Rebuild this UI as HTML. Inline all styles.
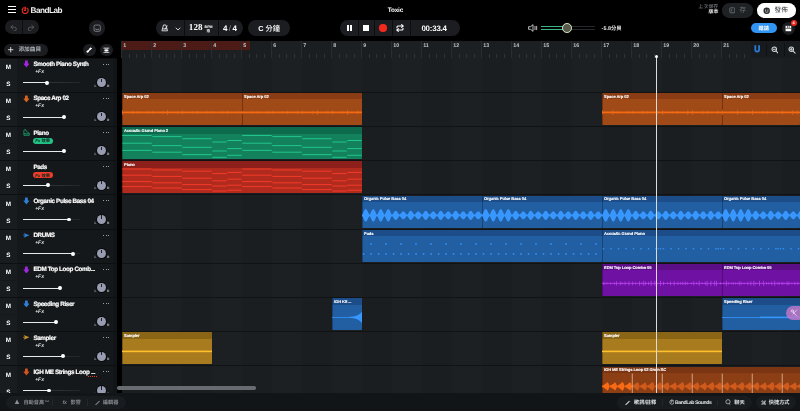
<!DOCTYPE html><html lang="zh-Hant"><head><meta charset="utf-8"><title>Toxic - BandLab</title>
<style>
html,body{margin:0;padding:0;background:#000}
body{width:800px;height:411px;overflow:hidden;position:relative;font-family:'Liberation Sans','Noto Sans CJK TC',sans-serif;color:#fff;-webkit-font-smoothing:antialiased;text-rendering:geometricPrecision}
div,span,svg{position:absolute;box-sizing:border-box}
.t{white-space:nowrap;line-height:1}
.pill{background:#1b1d20;border-radius:10px}
.clip{overflow:hidden;border-radius:0.8px}
.clip .h{left:0;top:0;width:100%;height:6.6px}
.clip .n{-webkit-text-stroke:0.1px #fff;left:2.2px;top:1.6px;font-size:4.1px;font-weight:700;color:#fff;white-space:nowrap;line-height:1;letter-spacing:-0.1px}
.ms{left:0;width:16.6px;background:#191c1f;color:#fff;font-weight:700;font-size:6.3px;text-align:center}
.tn{-webkit-text-stroke:0.18px #fff;font-weight:700;font-size:6.3px;color:#fff;white-space:nowrap;line-height:1;letter-spacing:-0.36px}
.fx{font-weight:700;font-style:italic;font-size:5px;color:#e8e8e8;white-space:nowrap;line-height:1}
.rn{font-size:5.3px;color:#c2c5c9;line-height:1;font-weight:700}
.t,.tn,.fx,.rn,.bt{margin-top:1.1px}
.clip .n{margin-top:0.3px}
.ms{padding-top:1.4px}
.bt{font-size:5.2px;color:#858a90;white-space:nowrap;line-height:1}

</style></head><body><div id="root" style="left:0;top:0;width:800px;height:411px;overflow:hidden;will-change:transform;transform:translateZ(0)">
<div style="left:7.6px;top:6.2px;width:8.2px;height:1px;background:#fff"></div>
<div style="left:7.6px;top:9.1px;width:8.2px;height:1px;background:#fff"></div>
<div style="left:7.6px;top:12.0px;width:8.2px;height:1px;background:#fff"></div>
<svg style="left:21.4px;top:5.6px" width="8.4" height="8.4" viewBox="0 0 24 24"><circle cx="12" cy="13" r="8.6" fill="none" stroke="#e12d20" stroke-width="3.2"/><path d="M12 2v11h-4" fill="none" stroke="#e12d20" stroke-width="3.2"/><rect x="10" y="0" width="8" height="5" fill="#000"/><path d="M12 1.5v11.5h-3.5" fill="none" stroke="#e12d20" stroke-width="3"/></svg>
<span class="t" style="left:30.6px;top:5.9px;font-size:8.2px;font-weight:700;letter-spacing:-0.5px;color:#f2f2f2">BandLab</span>
<span class="t" style="left:387.8px;top:7px;font-size:6.4px;font-weight:700;letter-spacing:-0.2px">Toxic</span>
<div class="pill" style="left:5.2px;top:20.3px;width:33.6px;height:14.2px;border-radius:7.1px"></div>
<svg style="left:9.6px;top:23.6px" width="7.6" height="7.6" viewBox="0 0 24 24" fill="none" stroke="#5f6469" stroke-width="2.6" stroke-linecap="round" stroke-linejoin="round"><path d="M9 4L3 10l6 6"/><path d="M3 10h11a6 6 0 0 1 0 12h-2"/></svg>
<svg style="left:26.6px;top:23.6px" width="7.6" height="7.6" viewBox="0 0 24 24" fill="none" stroke="#5f6469" stroke-width="2.6" stroke-linecap="round" stroke-linejoin="round"><path d="M15 4l6 6-6 6"/><path d="M21 10H10a6 6 0 0 0 0 12h2"/></svg>
<div style="left:22px;top:20.3px;width:0.6px;height:14.2px;background:#0c0d0e"></div>
<div class="pill" style="left:89.4px;top:20.2px;width:15.4px;height:15.4px;border-radius:50%"></div>
<svg style="left:92.9px;top:23.7px" width="8.4" height="8.4" viewBox="0 0 24 24" fill="none" stroke="#8f959b" stroke-width="2.2" stroke-linejoin="round"><rect x="3" y="3" width="18" height="18" rx="4"/><path d="M8 13v3M16 13v3M8 16h8" /></svg>
<div class="pill" style="left:155.6px;top:20.2px;width:87.6px;height:15.8px;border-radius:7.9px"></div>
<div style="left:184.2px;top:20.2px;width:0.6px;height:15.8px;background:#0c0d0e"></div>
<div style="left:218.3px;top:20.2px;width:0.6px;height:15.8px;background:#0c0d0e"></div>
<svg style="left:160.6px;top:24.2px" width="7.8" height="7.8" viewBox="0 0 24 24" fill="none" stroke="#f0f0f0" stroke-width="2.6" stroke-linejoin="round" stroke-linecap="round"><path d="M9 3h6l5 18H4z"/><path d="M12 16L19 6"/><path d="M6 15h12"/></svg>
<svg style="left:174.6px;top:25.6px" width="6" height="6" viewBox="0 0 24 24" fill="none" stroke="#f0f0f0" stroke-width="3.4" stroke-linecap="round" stroke-linejoin="round"><path d="M4 8l8 8 8-8"/></svg>
<span class="t" style="left:188.8px;top:22px;font-size:9.1px;font-weight:700;font-family:'Liberation Serif',serif;letter-spacing:0.05px">128</span>
<span class="t" style="left:204.6px;top:25.1px;font-size:3.6px;font-weight:700">BPM</span>
<span class="t" style="left:206.6px;top:28.7px;font-size:3.6px;font-weight:700">拍</span>
<span class="t" style="left:222.9px;top:23.7px;font-size:8px;font-weight:700;letter-spacing:1.5px">4<i style="font-style:normal;font-weight:400;color:#8a8f95">/</i>4</span>
<div class="pill" style="left:248px;top:20.2px;width:41.8px;height:15.8px;border-radius:7.9px"></div>
<span class="t" style="left:258.2px;top:24.4px;font-size:7.3px;font-weight:500"><b style="font-weight:700">C</b> 分鐘</span>
<div class="pill" style="left:340px;top:20.2px;width:120.4px;height:15.8px;border-radius:7.9px"></div>
<div style="left:357.8px;top:20.2px;width:0.6px;height:15.8px;background:#0c0d0e"></div>
<div style="left:374.2px;top:20.2px;width:0.6px;height:15.8px;background:#0c0d0e"></div>
<div style="left:391.6px;top:20.2px;width:0.6px;height:15.8px;background:#0c0d0e"></div>
<div style="left:409.8px;top:20.2px;width:0.6px;height:15.8px;background:#0c0d0e"></div>
<div style="left:347.2px;top:25.2px;width:1.5px;height:5.8px;background:#fff"></div>
<div style="left:350.4px;top:25.2px;width:1.5px;height:5.8px;background:#fff"></div>
<div style="left:362.8px;top:25.3px;width:5.8px;height:5.8px;background:#fff"></div>
<div style="left:379.2px;top:24.3px;width:7.4px;height:7.4px;border-radius:50%;background:#f5281e"></div>
<svg style="left:396.2px;top:24.2px" width="8" height="8" viewBox="0 0 24 24" fill="none" stroke="#fff" stroke-width="3.3" stroke-linecap="round" stroke-linejoin="round"><path d="M17 2l4 4-4 4"/><path d="M3 11V9a3 3 0 0 1 3-3h15"/><path d="M7 22l-4-4 4-4"/><path d="M21 13v2a3 3 0 0 1-3 3H3"/></svg>
<span class="t" style="left:421.4px;top:23.8px;font-size:7.9px;font-weight:700;letter-spacing:-0.2px">00:33.4</span>
<svg style="left:527.6px;top:24px" width="10" height="8" viewBox="0 0 30 24" fill="none" stroke="#e8e8e8" stroke-width="2.4" stroke-linejoin="round" stroke-linecap="round"><path d="M3 8h5l7-6v20l-7-6H3z"/><path d="M21 7v10M26 7v10"/></svg>
<div style="left:541.4px;top:25.7px;width:53.6px;height:1.3px;background:#25292c;border-radius:1px"></div>
<div style="left:541.4px;top:25.7px;width:26px;height:1.3px;background:linear-gradient(90deg,#3fb585 0,#3fb585 85%,#b9c86a 100%);border-radius:1px"></div>
<div style="left:541.4px;top:29.1px;width:53.6px;height:1.3px;background:#25292c;border-radius:1px"></div>
<div style="left:541.4px;top:29.1px;width:26px;height:1.3px;background:linear-gradient(90deg,#3fb585 0,#3fb585 85%,#b9c86a 100%);border-radius:1px"></div>
<div style="left:562px;top:23.1px;width:9.8px;height:9.8px;border-radius:50%;background:#555a4c;border:1.2px solid #e3ebc2"></div>
<span class="t" style="left:601.6px;top:25.6px;font-size:5.4px;font-weight:700;color:#e8e8e8">-5.8分貝</span>
<span class="t" style="left:698.6px;top:4.6px;font-size:4.9px;color:#8d9298">上次保存</span>
<span class="t" style="left:708.6px;top:9.8px;font-size:4.9px;color:#e8e8e8;font-weight:700">版本</span>
<div class="pill" style="left:722.4px;top:3px;width:31px;height:14.6px;border-radius:7.3px;background:#1f2225"></div>
<svg style="left:728.8px;top:7px" width="6.6" height="6.6" viewBox="0 0 24 24" fill="none" stroke="#80858b" stroke-width="2.6" stroke-linejoin="round"><rect x="3" y="3" width="18" height="18" rx="3"/><path d="M10 8v8"/></svg>
<span class="t" style="left:739.4px;top:6.6px;font-size:6.6px;color:#6f747a">存</span>
<div style="left:757px;top:3px;width:39.2px;height:14.6px;border-radius:7.3px;background:#fff"></div>
<svg style="left:763.4px;top:6.6px" width="7.4" height="7.4" viewBox="0 0 24 24"><circle cx="12" cy="12" r="10.5" fill="#2a2d30"/><circle cx="8" cy="10" r="1.8" fill="#fff"/><circle cx="16" cy="10" r="1.8" fill="#fff"/><path d="M7 15q5 4 10 0" stroke="#fff" stroke-width="2" fill="none"/></svg>
<span class="t" style="left:774.6px;top:6.7px;font-size:6.6px;color:#2a2d30">發佈</span>
<div style="left:751.2px;top:23px;width:26.2px;height:10.2px;border-radius:5.1px;background:#3294f2"></div>
<span class="t" style="left:758.6px;top:25.6px;font-size:5.2px;font-weight:700;color:#fff">邀請</span>
<div class="pill" style="left:782.2px;top:21.8px;width:13px;height:13px;border-radius:50%"></div>
<svg style="left:785.4px;top:24.8px" width="6.8" height="6.8" viewBox="0 0 24 24"><path d="M2 3h20v19H2z" fill="#fff"/><path d="M9 3v8M15 3v8M2 12h20" stroke="#1b1d20" stroke-width="2.2"/></svg>
<div style="left:790.6px;top:20.2px;width:6px;height:6px;border-radius:50%;background:#f0281e"></div>
<span class="t" style="left:792.4px;top:21.4px;font-size:3.8px;font-weight:700">4</span>
<div class="pill" style="left:3.6px;top:43.6px;width:44.4px;height:12.8px;border-radius:6.4px"></div>
<svg style="left:8.4px;top:47.4px" width="5.4" height="5.4" viewBox="0 0 24 24" stroke="#fff" stroke-width="3.4" stroke-linecap="round"><path d="M12 2v20M2 12h20"/></svg>
<span class="t" style="left:18.4px;top:47.2px;font-size:5.7px;font-weight:700;color:#aab0b6">添加曲目</span>
<div class="pill" style="left:83.2px;top:43.8px;width:12.6px;height:12.6px;border-radius:50%"></div>
<svg style="left:86.4px;top:47px" width="6.2" height="6.2" viewBox="0 0 24 24" fill="none" stroke="#fff" stroke-width="5.5" stroke-linecap="round"><path d="M7 17L17 7"/><circle cx="18" cy="6" r="3.2" fill="#fff" stroke-width="2"/><circle cx="6" cy="18" r="3.2" fill="#fff" stroke-width="2"/></svg>
<div class="pill" style="left:100.2px;top:43.8px;width:12.6px;height:12.6px;border-radius:50%"></div>
<svg style="left:103.1px;top:46.7px" width="6.8" height="6.8" viewBox="0 0 24 24" fill="none" stroke="#fff" stroke-width="2.8" stroke-linecap="round"><path d="M3 4h18M3 20h18"/><rect x="5" y="9" width="14" height="6" rx="1" fill="#fff" stroke="none"/><path d="M8 6l4 3 4-3M8 18l4-3 4 3" stroke-width="2"/></svg>
<div style="left:0;top:57.8px;width:117.2px;height:353.2px;background:#15181b"></div>
<div style="left:112.6px;top:57.8px;width:4.6px;height:353.2px;background:#121517"></div>
<div class="ms" style="top:58.4px;height:16.50px;line-height:16.50px">M</div>
<div class="ms" style="top:75.4px;height:16.60px;line-height:16.60px">S</div>
<div style="left:0;top:57.6px;width:117.2px;height:0.8px;background:#0c0e0f"></div>
<svg style="left:23.4px;top:60.4px" width="6.8" height="7.4" viewBox="0 0 22 24"><path d="M8 1.5h6a1.5 1.5 0 0 1 1.5 1.5v8.5h3.8a1 1 0 0 1 .8 1.7l-8 9.6a1.5 1.5 0 0 1-2.2 0l-8-9.6a1 1 0 0 1 .8-1.7h3.8V3A1.5 1.5 0 0 1 8 1.5z" fill="#a326e0"/></svg>
<span class="tn" style="left:33.4px;top:61.2px">Smooth Piano Synth</span>
<div style="left:103.3px;top:63.5px;width:1.2px;height:1.2px;border-radius:50%;background:#c9ccd0"></div>
<div style="left:105.6px;top:63.5px;width:1.2px;height:1.2px;border-radius:50%;background:#c9ccd0"></div>
<div style="left:107.9px;top:63.5px;width:1.2px;height:1.2px;border-radius:50%;background:#c9ccd0"></div>
<span class="fx" style="left:35.2px;top:69.2px">+Fx</span>
<div style="left:23px;top:82.3px;width:57px;height:0.8px;background:linear-gradient(90deg,#3a3d41,#24272a)"></div>
<div style="left:23px;top:82.3px;width:24.0px;height:0.8px;background:#e9eaeb"></div>
<div style="left:45.1px;top:80.8px;width:3.8px;height:3.8px;border-radius:50%;background:#fff"></div>
<div style="left:96.8px;top:77.9px;width:9.2px;height:9.2px;border-radius:50%;background:#979cb0;box-shadow:0 0 0 0.9px #08090b"></div>
<div style="left:100.95px;top:78.6px;width:0.9px;height:3.2px;background:#1d2026"></div>
<span class="t" style="left:94.4px;top:83.8px;font-size:3.3px;color:#b8bcc4;font-weight:700">L</span>
<span class="t" style="left:107px;top:83.8px;font-size:3.3px;color:#b8bcc4;font-weight:700">R</span>
<div class="ms" style="top:92.6px;height:16.50px;line-height:16.50px">M</div>
<div class="ms" style="top:109.6px;height:16.60px;line-height:16.60px">S</div>
<div style="left:0;top:91.8px;width:117.2px;height:0.8px;background:#0c0e0f"></div>
<svg style="left:23.4px;top:94.6px" width="6.8" height="7.4" viewBox="0 0 22 24"><path d="M8 1.5h6a1.5 1.5 0 0 1 1.5 1.5v8.5h3.8a1 1 0 0 1 .8 1.7l-8 9.6a1.5 1.5 0 0 1-2.2 0l-8-9.6a1 1 0 0 1 .8-1.7h3.8V3A1.5 1.5 0 0 1 8 1.5z" fill="#d8641e"/></svg>
<span class="tn" style="left:33.4px;top:95.4px">Space Arp 02</span>
<div style="left:103.3px;top:97.7px;width:1.2px;height:1.2px;border-radius:50%;background:#c9ccd0"></div>
<div style="left:105.6px;top:97.7px;width:1.2px;height:1.2px;border-radius:50%;background:#c9ccd0"></div>
<div style="left:107.9px;top:97.7px;width:1.2px;height:1.2px;border-radius:50%;background:#c9ccd0"></div>
<span class="fx" style="left:35.2px;top:103.4px">+Fx</span>
<div style="left:23px;top:116.5px;width:57px;height:0.8px;background:linear-gradient(90deg,#3a3d41,#24272a)"></div>
<div style="left:23px;top:116.5px;width:41.0px;height:0.8px;background:#e9eaeb"></div>
<div style="left:62.1px;top:115.0px;width:3.8px;height:3.8px;border-radius:50%;background:#fff"></div>
<div style="left:96.8px;top:112.1px;width:9.2px;height:9.2px;border-radius:50%;background:#979cb0;box-shadow:0 0 0 0.9px #08090b"></div>
<div style="left:100.95px;top:112.8px;width:0.9px;height:3.2px;background:#1d2026"></div>
<span class="t" style="left:94.4px;top:118.0px;font-size:3.3px;color:#b8bcc4;font-weight:700">L</span>
<span class="t" style="left:107px;top:118.0px;font-size:3.3px;color:#b8bcc4;font-weight:700">R</span>
<div class="ms" style="top:126.8px;height:16.50px;line-height:16.50px">M</div>
<div class="ms" style="top:143.8px;height:16.60px;line-height:16.60px">S</div>
<div style="left:0;top:126.0px;width:117.2px;height:0.8px;background:#0c0e0f"></div>
<svg style="left:23.4px;top:128.8px" width="7.2" height="7.2" viewBox="0 0 24 24" fill="none" stroke="#1fb87a" stroke-width="2.4" stroke-linejoin="round"><path d="M3 21V6a4 4 0 0 1 8 0c0 4 3 3 5 5 3 0 5 3 5 6v4z"/><path d="M3 16h18"/></svg>
<span class="tn" style="left:33.4px;top:129.6px">Piano</span>
<div style="left:103.3px;top:131.9px;width:1.2px;height:1.2px;border-radius:50%;background:#c9ccd0"></div>
<div style="left:105.6px;top:131.9px;width:1.2px;height:1.2px;border-radius:50%;background:#c9ccd0"></div>
<div style="left:107.9px;top:131.9px;width:1.2px;height:1.2px;border-radius:50%;background:#c9ccd0"></div>
<div style="left:33px;top:137.5px;width:20.2px;height:6px;border-radius:3px;background:#22c386"></div>
<span class="t" style="left:35.2px;top:138.3px;font-size:4.4px;font-weight:700;font-style:italic;color:#0f2a20">Fx</span>
<span class="t" style="left:41.4px;top:138.3px;font-size:4.3px;font-weight:700;color:#0f2a20">效果</span>
<div style="left:23px;top:150.7px;width:57px;height:0.8px;background:linear-gradient(90deg,#3a3d41,#24272a)"></div>
<div style="left:23px;top:150.7px;width:41.0px;height:0.8px;background:#e9eaeb"></div>
<div style="left:62.1px;top:149.2px;width:3.8px;height:3.8px;border-radius:50%;background:#fff"></div>
<div style="left:96.8px;top:146.3px;width:9.2px;height:9.2px;border-radius:50%;background:#979cb0;box-shadow:0 0 0 0.9px #08090b"></div>
<div style="left:100.95px;top:147.0px;width:0.9px;height:3.2px;background:#1d2026"></div>
<span class="t" style="left:94.4px;top:152.2px;font-size:3.3px;color:#b8bcc4;font-weight:700">L</span>
<span class="t" style="left:107px;top:152.2px;font-size:3.3px;color:#b8bcc4;font-weight:700">R</span>
<div class="ms" style="top:161.0px;height:16.50px;line-height:16.50px">M</div>
<div class="ms" style="top:178.0px;height:16.60px;line-height:16.60px">S</div>
<div style="left:0;top:160.2px;width:117.2px;height:0.8px;background:#0c0e0f"></div>
<span class="tn" style="left:33.4px;top:163.8px">Pads</span>
<div style="left:103.3px;top:166.1px;width:1.2px;height:1.2px;border-radius:50%;background:#c9ccd0"></div>
<div style="left:105.6px;top:166.1px;width:1.2px;height:1.2px;border-radius:50%;background:#c9ccd0"></div>
<div style="left:107.9px;top:166.1px;width:1.2px;height:1.2px;border-radius:50%;background:#c9ccd0"></div>
<div style="left:33px;top:171.7px;width:20.2px;height:6px;border-radius:3px;background:#f03c2a"></div>
<span class="t" style="left:35.2px;top:172.5px;font-size:4.4px;font-weight:700;font-style:italic;color:#0f2a20">Fx</span>
<span class="t" style="left:41.4px;top:172.5px;font-size:4.3px;font-weight:700;color:#0f2a20">效果</span>
<div style="left:23px;top:184.9px;width:57px;height:0.8px;background:linear-gradient(90deg,#3a3d41,#24272a)"></div>
<div style="left:23px;top:184.9px;width:25.0px;height:0.8px;background:#e9eaeb"></div>
<div style="left:46.1px;top:183.4px;width:3.8px;height:3.8px;border-radius:50%;background:#fff"></div>
<div style="left:96.8px;top:180.5px;width:9.2px;height:9.2px;border-radius:50%;background:#979cb0;box-shadow:0 0 0 0.9px #08090b"></div>
<div style="left:100.95px;top:181.2px;width:0.9px;height:3.2px;background:#1d2026"></div>
<span class="t" style="left:94.4px;top:186.4px;font-size:3.3px;color:#b8bcc4;font-weight:700">L</span>
<span class="t" style="left:107px;top:186.4px;font-size:3.3px;color:#b8bcc4;font-weight:700">R</span>
<div class="ms" style="top:195.2px;height:16.50px;line-height:16.50px">M</div>
<div class="ms" style="top:212.2px;height:16.60px;line-height:16.60px">S</div>
<div style="left:0;top:194.4px;width:117.2px;height:0.8px;background:#0c0e0f"></div>
<svg style="left:23.4px;top:197.2px" width="6.8" height="7.4" viewBox="0 0 22 24"><path d="M8 1.5h6a1.5 1.5 0 0 1 1.5 1.5v8.5h3.8a1 1 0 0 1 .8 1.7l-8 9.6a1.5 1.5 0 0 1-2.2 0l-8-9.6a1 1 0 0 1 .8-1.7h3.8V3A1.5 1.5 0 0 1 8 1.5z" fill="#2f7fd8"/></svg>
<span class="tn" style="left:33.4px;top:198.0px">Organic Pulse Bass 04</span>
<div style="left:103.3px;top:200.3px;width:1.2px;height:1.2px;border-radius:50%;background:#c9ccd0"></div>
<div style="left:105.6px;top:200.3px;width:1.2px;height:1.2px;border-radius:50%;background:#c9ccd0"></div>
<div style="left:107.9px;top:200.3px;width:1.2px;height:1.2px;border-radius:50%;background:#c9ccd0"></div>
<span class="fx" style="left:35.2px;top:206.0px">+Fx</span>
<div style="left:23px;top:219.1px;width:57px;height:0.8px;background:linear-gradient(90deg,#3a3d41,#24272a)"></div>
<div style="left:23px;top:219.1px;width:46.0px;height:0.8px;background:#e9eaeb"></div>
<div style="left:67.1px;top:217.6px;width:3.8px;height:3.8px;border-radius:50%;background:#fff"></div>
<div style="left:96.8px;top:214.7px;width:9.2px;height:9.2px;border-radius:50%;background:#979cb0;box-shadow:0 0 0 0.9px #08090b"></div>
<div style="left:100.95px;top:215.4px;width:0.9px;height:3.2px;background:#1d2026"></div>
<span class="t" style="left:94.4px;top:220.6px;font-size:3.3px;color:#b8bcc4;font-weight:700">L</span>
<span class="t" style="left:107px;top:220.6px;font-size:3.3px;color:#b8bcc4;font-weight:700">R</span>
<div class="ms" style="top:229.4px;height:16.50px;line-height:16.50px">M</div>
<div class="ms" style="top:246.4px;height:16.60px;line-height:16.60px">S</div>
<div style="left:0;top:228.6px;width:117.2px;height:0.8px;background:#0c0e0f"></div>
<svg style="left:23.4px;top:231.8px" width="7" height="6.6" viewBox="0 0 24 22"><path d="M2 3l20 8-20 8 5-8z" fill="#2f7fd8"/><path d="M0 11h9" stroke="#2f7fd8" stroke-width="2.4"/></svg>
<span class="tn" style="left:33.4px;top:232.2px">DRUMS</span>
<div style="left:103.3px;top:234.5px;width:1.2px;height:1.2px;border-radius:50%;background:#c9ccd0"></div>
<div style="left:105.6px;top:234.5px;width:1.2px;height:1.2px;border-radius:50%;background:#c9ccd0"></div>
<div style="left:107.9px;top:234.5px;width:1.2px;height:1.2px;border-radius:50%;background:#c9ccd0"></div>
<span class="fx" style="left:35.2px;top:240.2px">+Fx</span>
<div style="left:23px;top:253.3px;width:57px;height:0.8px;background:linear-gradient(90deg,#3a3d41,#24272a)"></div>
<div style="left:23px;top:253.3px;width:50.0px;height:0.8px;background:#e9eaeb"></div>
<div style="left:71.1px;top:251.8px;width:3.8px;height:3.8px;border-radius:50%;background:#fff"></div>
<div style="left:96.8px;top:248.9px;width:9.2px;height:9.2px;border-radius:50%;background:#979cb0;box-shadow:0 0 0 0.9px #08090b"></div>
<div style="left:100.95px;top:249.6px;width:0.9px;height:3.2px;background:#1d2026"></div>
<span class="t" style="left:94.4px;top:254.8px;font-size:3.3px;color:#b8bcc4;font-weight:700">L</span>
<span class="t" style="left:107px;top:254.8px;font-size:3.3px;color:#b8bcc4;font-weight:700">R</span>
<div class="ms" style="top:263.6px;height:16.50px;line-height:16.50px">M</div>
<div class="ms" style="top:280.6px;height:16.60px;line-height:16.60px">S</div>
<div style="left:0;top:262.8px;width:117.2px;height:0.8px;background:#0c0e0f"></div>
<svg style="left:23.4px;top:265.6px" width="6.8" height="7.4" viewBox="0 0 22 24"><path d="M8 1.5h6a1.5 1.5 0 0 1 1.5 1.5v8.5h3.8a1 1 0 0 1 .8 1.7l-8 9.6a1.5 1.5 0 0 1-2.2 0l-8-9.6a1 1 0 0 1 .8-1.7h3.8V3A1.5 1.5 0 0 1 8 1.5z" fill="#a326e0"/></svg>
<span class="tn" style="left:33.4px;top:266.4px">EDM Top Loop Comb...</span>
<div style="left:103.3px;top:268.7px;width:1.2px;height:1.2px;border-radius:50%;background:#c9ccd0"></div>
<div style="left:105.6px;top:268.7px;width:1.2px;height:1.2px;border-radius:50%;background:#c9ccd0"></div>
<div style="left:107.9px;top:268.7px;width:1.2px;height:1.2px;border-radius:50%;background:#c9ccd0"></div>
<span class="fx" style="left:35.2px;top:274.4px">+Fx</span>
<div style="left:23px;top:287.5px;width:57px;height:0.8px;background:linear-gradient(90deg,#3a3d41,#24272a)"></div>
<div style="left:23px;top:287.5px;width:37.0px;height:0.8px;background:#e9eaeb"></div>
<div style="left:58.1px;top:286.0px;width:3.8px;height:3.8px;border-radius:50%;background:#fff"></div>
<div style="left:96.8px;top:283.1px;width:9.2px;height:9.2px;border-radius:50%;background:#979cb0;box-shadow:0 0 0 0.9px #08090b"></div>
<div style="left:100.95px;top:283.8px;width:0.9px;height:3.2px;background:#1d2026"></div>
<span class="t" style="left:94.4px;top:289.0px;font-size:3.3px;color:#b8bcc4;font-weight:700">L</span>
<span class="t" style="left:107px;top:289.0px;font-size:3.3px;color:#b8bcc4;font-weight:700">R</span>
<div class="ms" style="top:297.8px;height:16.50px;line-height:16.50px">M</div>
<div class="ms" style="top:314.8px;height:16.60px;line-height:16.60px">S</div>
<div style="left:0;top:297.0px;width:117.2px;height:0.8px;background:#0c0e0f"></div>
<svg style="left:23.4px;top:299.8px" width="6.8" height="7.4" viewBox="0 0 22 24"><path d="M8 1.5h6a1.5 1.5 0 0 1 1.5 1.5v8.5h3.8a1 1 0 0 1 .8 1.7l-8 9.6a1.5 1.5 0 0 1-2.2 0l-8-9.6a1 1 0 0 1 .8-1.7h3.8V3A1.5 1.5 0 0 1 8 1.5z" fill="#2f7fd8"/></svg>
<span class="tn" style="left:33.4px;top:300.6px">Speeding Riser</span>
<div style="left:103.3px;top:302.9px;width:1.2px;height:1.2px;border-radius:50%;background:#c9ccd0"></div>
<div style="left:105.6px;top:302.9px;width:1.2px;height:1.2px;border-radius:50%;background:#c9ccd0"></div>
<div style="left:107.9px;top:302.9px;width:1.2px;height:1.2px;border-radius:50%;background:#c9ccd0"></div>
<span class="fx" style="left:35.2px;top:308.6px">+Fx</span>
<div style="left:23px;top:321.7px;width:57px;height:0.8px;background:linear-gradient(90deg,#3a3d41,#24272a)"></div>
<div style="left:23px;top:321.7px;width:32.7px;height:0.8px;background:#e9eaeb"></div>
<div style="left:53.8px;top:320.2px;width:3.8px;height:3.8px;border-radius:50%;background:#fff"></div>
<div style="left:96.8px;top:317.3px;width:9.2px;height:9.2px;border-radius:50%;background:#979cb0;box-shadow:0 0 0 0.9px #08090b"></div>
<div style="left:100.95px;top:318.0px;width:0.9px;height:3.2px;background:#1d2026"></div>
<span class="t" style="left:94.4px;top:323.2px;font-size:3.3px;color:#b8bcc4;font-weight:700">L</span>
<span class="t" style="left:107px;top:323.2px;font-size:3.3px;color:#b8bcc4;font-weight:700">R</span>
<div class="ms" style="top:332.0px;height:16.50px;line-height:16.50px">M</div>
<div class="ms" style="top:349.0px;height:16.60px;line-height:16.60px">S</div>
<div style="left:0;top:331.2px;width:117.2px;height:0.8px;background:#0c0e0f"></div>
<svg style="left:23.4px;top:334.4px" width="7" height="6.6" viewBox="0 0 24 22"><path d="M2 3l20 8-20 8 5-8z" fill="#c8922a"/><path d="M0 11h9" stroke="#c8922a" stroke-width="2.4"/></svg>
<span class="tn" style="left:33.4px;top:334.8px">Sampler</span>
<div style="left:103.3px;top:337.1px;width:1.2px;height:1.2px;border-radius:50%;background:#c9ccd0"></div>
<div style="left:105.6px;top:337.1px;width:1.2px;height:1.2px;border-radius:50%;background:#c9ccd0"></div>
<div style="left:107.9px;top:337.1px;width:1.2px;height:1.2px;border-radius:50%;background:#c9ccd0"></div>
<span class="fx" style="left:35.2px;top:342.8px">+Fx</span>
<div style="left:23px;top:355.9px;width:57px;height:0.8px;background:linear-gradient(90deg,#3a3d41,#24272a)"></div>
<div style="left:23px;top:355.9px;width:39.7px;height:0.8px;background:#e9eaeb"></div>
<div style="left:60.8px;top:354.4px;width:3.8px;height:3.8px;border-radius:50%;background:#fff"></div>
<div style="left:96.8px;top:351.5px;width:9.2px;height:9.2px;border-radius:50%;background:#979cb0;box-shadow:0 0 0 0.9px #08090b"></div>
<div style="left:100.95px;top:352.2px;width:0.9px;height:3.2px;background:#1d2026"></div>
<span class="t" style="left:94.4px;top:357.4px;font-size:3.3px;color:#b8bcc4;font-weight:700">L</span>
<span class="t" style="left:107px;top:357.4px;font-size:3.3px;color:#b8bcc4;font-weight:700">R</span>
<div class="ms" style="top:366.2px;height:16.50px;line-height:16.50px">M</div>
<div class="ms" style="top:383.2px;height:16.60px;line-height:16.60px">S</div>
<div style="left:0;top:365.4px;width:117.2px;height:0.8px;background:#0c0e0f"></div>
<svg style="left:23.4px;top:368.2px" width="6.8" height="7.4" viewBox="0 0 22 24"><path d="M8 1.5h6a1.5 1.5 0 0 1 1.5 1.5v8.5h3.8a1 1 0 0 1 .8 1.7l-8 9.6a1.5 1.5 0 0 1-2.2 0l-8-9.6a1 1 0 0 1 .8-1.7h3.8V3A1.5 1.5 0 0 1 8 1.5z" fill="#d8541e"/></svg>
<span class="tn" style="left:33.4px;top:369.0px">IGH ME Strings Loop ...</span>
<div style="left:103.3px;top:371.3px;width:1.2px;height:1.2px;border-radius:50%;background:#c9ccd0"></div>
<div style="left:105.6px;top:371.3px;width:1.2px;height:1.2px;border-radius:50%;background:#c9ccd0"></div>
<div style="left:107.9px;top:371.3px;width:1.2px;height:1.2px;border-radius:50%;background:#c9ccd0"></div>
<div style="left:87.8px;top:375.6px;width:9.6px;height:0;border-top:0.6px dotted #e23a2a"></div>
<span class="fx" style="left:35.2px;top:377.0px">+Fx</span>
<div style="left:23px;top:390.1px;width:57px;height:0.8px;background:linear-gradient(90deg,#3a3d41,#24272a)"></div>
<div style="left:23px;top:390.1px;width:26.0px;height:0.8px;background:#e9eaeb"></div>
<div style="left:47.1px;top:388.6px;width:3.8px;height:3.8px;border-radius:50%;background:#fff"></div>
<div style="left:96.8px;top:385.7px;width:9.2px;height:9.2px;border-radius:50%;background:#979cb0;box-shadow:0 0 0 0.9px #08090b"></div>
<div style="left:100.95px;top:386.4px;width:0.9px;height:3.2px;background:#1d2026"></div>
<span class="t" style="left:94.4px;top:391.6px;font-size:3.3px;color:#b8bcc4;font-weight:700">L</span>
<span class="t" style="left:107px;top:391.6px;font-size:3.3px;color:#b8bcc4;font-weight:700">R</span>
<div id="tl" style="left:121.7px;top:41.2px;width:678.3px;height:369.8px;background:#1b1f22;overflow:hidden"></div>
<div style="left:121.7px;top:41.2px;width:678.3px;height:369.8px;background:repeating-linear-gradient(90deg,rgba(0,0,0,0.04) 0,rgba(0,0,0,0.04) 30px,rgba(255,255,255,0.005) 30px,rgba(255,255,255,0.005) 60px)"></div>
<div style="left:121.7px;top:41.2px;width:127.9px;height:8.6px;background:#4c1b15"></div>
<div style="left:121.4px;top:41.2px;width:0.6px;height:16.6px;background:#292d31"></div>
<span class="rn" style="left:123.2px;top:42.8px">1</span>
<div style="left:128.9px;top:53.8px;width:0.6px;height:4px;background:#303438"></div>
<div style="left:136.4px;top:53.8px;width:0.6px;height:4px;background:#303438"></div>
<div style="left:143.9px;top:53.8px;width:0.6px;height:4px;background:#303438"></div>
<div style="left:151.4px;top:41.2px;width:0.6px;height:16.6px;background:#292d31"></div>
<span class="rn" style="left:153.2px;top:42.8px">2</span>
<div style="left:158.9px;top:53.8px;width:0.6px;height:4px;background:#303438"></div>
<div style="left:166.4px;top:53.8px;width:0.6px;height:4px;background:#303438"></div>
<div style="left:173.9px;top:53.8px;width:0.6px;height:4px;background:#303438"></div>
<div style="left:181.4px;top:41.2px;width:0.6px;height:16.6px;background:#292d31"></div>
<span class="rn" style="left:183.2px;top:42.8px">3</span>
<div style="left:188.9px;top:53.8px;width:0.6px;height:4px;background:#303438"></div>
<div style="left:196.4px;top:53.8px;width:0.6px;height:4px;background:#303438"></div>
<div style="left:203.9px;top:53.8px;width:0.6px;height:4px;background:#303438"></div>
<div style="left:211.4px;top:41.2px;width:0.6px;height:16.6px;background:#292d31"></div>
<span class="rn" style="left:213.2px;top:42.8px">4</span>
<div style="left:218.9px;top:53.8px;width:0.6px;height:4px;background:#303438"></div>
<div style="left:226.4px;top:53.8px;width:0.6px;height:4px;background:#303438"></div>
<div style="left:233.9px;top:53.8px;width:0.6px;height:4px;background:#303438"></div>
<div style="left:241.4px;top:41.2px;width:0.6px;height:16.6px;background:#292d31"></div>
<span class="rn" style="left:243.2px;top:42.8px">5</span>
<div style="left:248.9px;top:53.8px;width:0.6px;height:4px;background:#303438"></div>
<div style="left:256.4px;top:53.8px;width:0.6px;height:4px;background:#303438"></div>
<div style="left:263.9px;top:53.8px;width:0.6px;height:4px;background:#303438"></div>
<div style="left:271.4px;top:41.2px;width:0.6px;height:16.6px;background:#292d31"></div>
<span class="rn" style="left:273.2px;top:42.8px">6</span>
<div style="left:278.9px;top:53.8px;width:0.6px;height:4px;background:#303438"></div>
<div style="left:286.4px;top:53.8px;width:0.6px;height:4px;background:#303438"></div>
<div style="left:293.9px;top:53.8px;width:0.6px;height:4px;background:#303438"></div>
<div style="left:301.4px;top:41.2px;width:0.6px;height:16.6px;background:#292d31"></div>
<span class="rn" style="left:303.2px;top:42.8px">7</span>
<div style="left:308.9px;top:53.8px;width:0.6px;height:4px;background:#303438"></div>
<div style="left:316.4px;top:53.8px;width:0.6px;height:4px;background:#303438"></div>
<div style="left:323.9px;top:53.8px;width:0.6px;height:4px;background:#303438"></div>
<div style="left:331.4px;top:41.2px;width:0.6px;height:16.6px;background:#292d31"></div>
<span class="rn" style="left:333.2px;top:42.8px">8</span>
<div style="left:338.9px;top:53.8px;width:0.6px;height:4px;background:#303438"></div>
<div style="left:346.4px;top:53.8px;width:0.6px;height:4px;background:#303438"></div>
<div style="left:353.9px;top:53.8px;width:0.6px;height:4px;background:#303438"></div>
<div style="left:361.4px;top:41.2px;width:0.6px;height:16.6px;background:#292d31"></div>
<span class="rn" style="left:363.2px;top:42.8px">9</span>
<div style="left:368.9px;top:53.8px;width:0.6px;height:4px;background:#303438"></div>
<div style="left:376.4px;top:53.8px;width:0.6px;height:4px;background:#303438"></div>
<div style="left:383.9px;top:53.8px;width:0.6px;height:4px;background:#303438"></div>
<div style="left:391.4px;top:41.2px;width:0.6px;height:16.6px;background:#292d31"></div>
<span class="rn" style="left:393.2px;top:42.8px">10</span>
<div style="left:398.9px;top:53.8px;width:0.6px;height:4px;background:#303438"></div>
<div style="left:406.4px;top:53.8px;width:0.6px;height:4px;background:#303438"></div>
<div style="left:413.9px;top:53.8px;width:0.6px;height:4px;background:#303438"></div>
<div style="left:421.4px;top:41.2px;width:0.6px;height:16.6px;background:#292d31"></div>
<span class="rn" style="left:423.2px;top:42.8px">11</span>
<div style="left:428.9px;top:53.8px;width:0.6px;height:4px;background:#303438"></div>
<div style="left:436.4px;top:53.8px;width:0.6px;height:4px;background:#303438"></div>
<div style="left:443.9px;top:53.8px;width:0.6px;height:4px;background:#303438"></div>
<div style="left:451.4px;top:41.2px;width:0.6px;height:16.6px;background:#292d31"></div>
<span class="rn" style="left:453.2px;top:42.8px">12</span>
<div style="left:458.9px;top:53.8px;width:0.6px;height:4px;background:#303438"></div>
<div style="left:466.4px;top:53.8px;width:0.6px;height:4px;background:#303438"></div>
<div style="left:473.9px;top:53.8px;width:0.6px;height:4px;background:#303438"></div>
<div style="left:481.4px;top:41.2px;width:0.6px;height:16.6px;background:#292d31"></div>
<span class="rn" style="left:483.2px;top:42.8px">13</span>
<div style="left:488.9px;top:53.8px;width:0.6px;height:4px;background:#303438"></div>
<div style="left:496.4px;top:53.8px;width:0.6px;height:4px;background:#303438"></div>
<div style="left:503.9px;top:53.8px;width:0.6px;height:4px;background:#303438"></div>
<div style="left:511.4px;top:41.2px;width:0.6px;height:16.6px;background:#292d31"></div>
<span class="rn" style="left:513.2px;top:42.8px">14</span>
<div style="left:518.9px;top:53.8px;width:0.6px;height:4px;background:#303438"></div>
<div style="left:526.4px;top:53.8px;width:0.6px;height:4px;background:#303438"></div>
<div style="left:533.9px;top:53.8px;width:0.6px;height:4px;background:#303438"></div>
<div style="left:541.4px;top:41.2px;width:0.6px;height:16.6px;background:#292d31"></div>
<span class="rn" style="left:543.2px;top:42.8px">15</span>
<div style="left:548.9px;top:53.8px;width:0.6px;height:4px;background:#303438"></div>
<div style="left:556.4px;top:53.8px;width:0.6px;height:4px;background:#303438"></div>
<div style="left:563.9px;top:53.8px;width:0.6px;height:4px;background:#303438"></div>
<div style="left:571.4px;top:41.2px;width:0.6px;height:16.6px;background:#292d31"></div>
<span class="rn" style="left:573.2px;top:42.8px">16</span>
<div style="left:578.9px;top:53.8px;width:0.6px;height:4px;background:#303438"></div>
<div style="left:586.4px;top:53.8px;width:0.6px;height:4px;background:#303438"></div>
<div style="left:593.9px;top:53.8px;width:0.6px;height:4px;background:#303438"></div>
<div style="left:601.4px;top:41.2px;width:0.6px;height:16.6px;background:#292d31"></div>
<span class="rn" style="left:603.2px;top:42.8px">17</span>
<div style="left:608.9px;top:53.8px;width:0.6px;height:4px;background:#303438"></div>
<div style="left:616.4px;top:53.8px;width:0.6px;height:4px;background:#303438"></div>
<div style="left:623.9px;top:53.8px;width:0.6px;height:4px;background:#303438"></div>
<div style="left:631.4px;top:41.2px;width:0.6px;height:16.6px;background:#292d31"></div>
<span class="rn" style="left:633.2px;top:42.8px">18</span>
<div style="left:638.9px;top:53.8px;width:0.6px;height:4px;background:#303438"></div>
<div style="left:646.4px;top:53.8px;width:0.6px;height:4px;background:#303438"></div>
<div style="left:653.9px;top:53.8px;width:0.6px;height:4px;background:#303438"></div>
<div style="left:661.4px;top:41.2px;width:0.6px;height:16.6px;background:#292d31"></div>
<span class="rn" style="left:663.2px;top:42.8px">19</span>
<div style="left:668.9px;top:53.8px;width:0.6px;height:4px;background:#303438"></div>
<div style="left:676.4px;top:53.8px;width:0.6px;height:4px;background:#303438"></div>
<div style="left:683.9px;top:53.8px;width:0.6px;height:4px;background:#303438"></div>
<div style="left:691.4px;top:41.2px;width:0.6px;height:16.6px;background:#292d31"></div>
<span class="rn" style="left:693.2px;top:42.8px">20</span>
<div style="left:698.9px;top:53.8px;width:0.6px;height:4px;background:#303438"></div>
<div style="left:706.4px;top:53.8px;width:0.6px;height:4px;background:#303438"></div>
<div style="left:713.9px;top:53.8px;width:0.6px;height:4px;background:#303438"></div>
<div style="left:721.4px;top:41.2px;width:0.6px;height:16.6px;background:#292d31"></div>
<span class="rn" style="left:723.2px;top:42.8px">21</span>
<div style="left:728.9px;top:53.8px;width:0.6px;height:4px;background:#303438"></div>
<div style="left:736.4px;top:53.8px;width:0.6px;height:4px;background:#303438"></div>
<div style="left:743.9px;top:53.8px;width:0.6px;height:4px;background:#303438"></div>
<div style="left:751.4px;top:41.2px;width:0.6px;height:16.6px;background:#292d31"></div>
<div style="left:781.4px;top:41.2px;width:0.6px;height:16.6px;background:#292d31"></div>
<div style="left:751px;top:41.2px;width:49px;height:16.6px;background:#181b1e"></div>
<div style="left:766.3px;top:43px;width:0.5px;height:13px;background:#0f1113"></div>
<div style="left:783.8px;top:43px;width:0.5px;height:13px;background:#0f1113"></div>
<svg style="left:754.4px;top:44.6px" width="6.4" height="8.2" viewBox="0 0 20 26" fill="none" stroke="#2a7ad8" stroke-width="5.6"><path d="M4 1v14a6 6 0 0 0 12 0V1"/></svg>
<svg style="left:770.6px;top:45.8px" width="7.8" height="7.8" viewBox="0 0 24 24" fill="none" stroke="#d4d7da" stroke-width="3.2" stroke-linecap="round"><circle cx="10" cy="10" r="7"/><path d="M15.5 15.5L22 22"/><path d="M7 10h6"/></svg>
<svg style="left:788.2px;top:45.8px" width="7.8" height="7.8" viewBox="0 0 24 24" fill="none" stroke="#d4d7da" stroke-width="3.2" stroke-linecap="round"><circle cx="10" cy="10" r="7"/><path d="M15.5 15.5L22 22"/><path d="M7 10h6 M10 7v6"/></svg>
<div style="left:121.7px;top:91.7px;width:678.3px;height:0.9px;background:#101214"></div>
<div style="left:121.7px;top:125.9px;width:678.3px;height:0.9px;background:#101214"></div>
<div style="left:121.7px;top:160.1px;width:678.3px;height:0.9px;background:#101214"></div>
<div style="left:121.7px;top:194.3px;width:678.3px;height:0.9px;background:#101214"></div>
<div style="left:121.7px;top:228.5px;width:678.3px;height:0.9px;background:#101214"></div>
<div style="left:121.7px;top:262.7px;width:678.3px;height:0.9px;background:#101214"></div>
<div style="left:121.7px;top:296.9px;width:678.3px;height:0.9px;background:#101214"></div>
<div style="left:121.7px;top:331.1px;width:678.3px;height:0.9px;background:#101214"></div>
<div style="left:121.7px;top:365.3px;width:678.3px;height:0.9px;background:#101214"></div>
<div style="left:121.7px;top:399.5px;width:678.3px;height:0.9px;background:#101214"></div>
<div class="clip" style="left:121.85px;top:92.9px;width:119.70px;height:32.1px;background:#a04a17"><div class="h" style="background:#8a3c14"></div><div style="left:0;top:0;width:0.5px;height:100%;background:rgba(0,0,0,0.28)"></div><svg style="left:0;top:0" width="120.0" height="32.1" viewBox="0 0 120.0 32.1"><rect x="0" y="18.5" width="120.0" height="1.8" fill="#f56a12"/><rect x="0.0" y="16.8" width="0.7" height="5.2" fill="#f56a12" opacity="0.8"/><rect x="10.5" y="17.4" width="0.7" height="4.0" fill="#f56a12" opacity="0.8"/><rect x="15.0" y="18.0" width="0.7" height="2.8" fill="#f56a12" opacity="0.8"/><rect x="25.5" y="17.8" width="0.7" height="3.2" fill="#f56a12" opacity="0.8"/><rect x="30.0" y="17.8" width="0.7" height="3.2" fill="#f56a12" opacity="0.8"/><rect x="40.5" y="17.8" width="0.7" height="3.2" fill="#f56a12" opacity="0.8"/><rect x="45.0" y="16.8" width="0.7" height="5.2" fill="#f56a12" opacity="0.8"/><rect x="55.5" y="17.8" width="0.7" height="3.2" fill="#f56a12" opacity="0.8"/><rect x="60.0" y="17.4" width="0.7" height="4.0" fill="#f56a12" opacity="0.8"/><rect x="70.5" y="17.8" width="0.7" height="3.2" fill="#f56a12" opacity="0.8"/><rect x="75.0" y="17.8" width="0.7" height="3.2" fill="#f56a12" opacity="0.8"/><rect x="85.5" y="18.0" width="0.7" height="2.8" fill="#f56a12" opacity="0.8"/><rect x="90.0" y="18.0" width="0.7" height="2.8" fill="#f56a12" opacity="0.8"/><rect x="100.5" y="17.8" width="0.7" height="3.2" fill="#f56a12" opacity="0.8"/><rect x="105.0" y="17.4" width="0.7" height="4.0" fill="#f56a12" opacity="0.8"/><rect x="115.5" y="17.8" width="0.7" height="3.2" fill="#f56a12" opacity="0.8"/></svg><span class="n">Space Arp 02</span></div>
<div class="clip" style="left:241.85px;top:92.9px;width:119.70px;height:32.1px;background:#a04a17"><div class="h" style="background:#8a3c14"></div><div style="left:0;top:0;width:0.5px;height:100%;background:rgba(0,0,0,0.28)"></div><svg style="left:0;top:0" width="120.0" height="32.1" viewBox="0 0 120.0 32.1"><rect x="0" y="18.5" width="120.0" height="1.8" fill="#f56a12"/><rect x="0.0" y="18.0" width="0.7" height="2.8" fill="#f56a12" opacity="0.8"/><rect x="10.5" y="17.8" width="0.7" height="3.2" fill="#f56a12" opacity="0.8"/><rect x="15.0" y="17.8" width="0.7" height="3.2" fill="#f56a12" opacity="0.8"/><rect x="25.5" y="17.4" width="0.7" height="4.0" fill="#f56a12" opacity="0.8"/><rect x="30.0" y="17.8" width="0.7" height="3.2" fill="#f56a12" opacity="0.8"/><rect x="40.5" y="18.0" width="0.7" height="2.8" fill="#f56a12" opacity="0.8"/><rect x="45.0" y="17.8" width="0.7" height="3.2" fill="#f56a12" opacity="0.8"/><rect x="55.5" y="17.4" width="0.7" height="4.0" fill="#f56a12" opacity="0.8"/><rect x="60.0" y="17.8" width="0.7" height="3.2" fill="#f56a12" opacity="0.8"/><rect x="70.5" y="17.4" width="0.7" height="4.0" fill="#f56a12" opacity="0.8"/><rect x="75.0" y="16.8" width="0.7" height="5.2" fill="#f56a12" opacity="0.8"/><rect x="85.5" y="18.0" width="0.7" height="2.8" fill="#f56a12" opacity="0.8"/><rect x="90.0" y="17.4" width="0.7" height="4.0" fill="#f56a12" opacity="0.8"/><rect x="100.5" y="17.8" width="0.7" height="3.2" fill="#f56a12" opacity="0.8"/><rect x="105.0" y="16.8" width="0.7" height="5.2" fill="#f56a12" opacity="0.8"/><rect x="115.5" y="17.4" width="0.7" height="4.0" fill="#f56a12" opacity="0.8"/><rect x="120.0" y="17.8" width="0.7" height="3.2" fill="#f56a12" opacity="0.8"/></svg><span class="n">Space Arp 02</span></div>
<div class="clip" style="left:601.85px;top:92.9px;width:119.70px;height:32.1px;background:#a04a17"><div class="h" style="background:#8a3c14"></div><div style="left:0;top:0;width:0.5px;height:100%;background:rgba(0,0,0,0.28)"></div><svg style="left:0;top:0" width="120.0" height="32.1" viewBox="0 0 120.0 32.1"><rect x="0" y="18.5" width="120.0" height="1.8" fill="#f56a12"/><rect x="0.0" y="17.4" width="0.7" height="4.0" fill="#f56a12" opacity="0.8"/><rect x="10.5" y="16.8" width="0.7" height="5.2" fill="#f56a12" opacity="0.8"/><rect x="15.0" y="17.8" width="0.7" height="3.2" fill="#f56a12" opacity="0.8"/><rect x="25.5" y="17.8" width="0.7" height="3.2" fill="#f56a12" opacity="0.8"/><rect x="30.0" y="17.8" width="0.7" height="3.2" fill="#f56a12" opacity="0.8"/><rect x="40.5" y="17.4" width="0.7" height="4.0" fill="#f56a12" opacity="0.8"/><rect x="45.0" y="18.0" width="0.7" height="2.8" fill="#f56a12" opacity="0.8"/><rect x="55.5" y="18.0" width="0.7" height="2.8" fill="#f56a12" opacity="0.8"/><rect x="60.0" y="16.8" width="0.7" height="5.2" fill="#f56a12" opacity="0.8"/><rect x="70.5" y="18.0" width="0.7" height="2.8" fill="#f56a12" opacity="0.8"/><rect x="75.0" y="18.0" width="0.7" height="2.8" fill="#f56a12" opacity="0.8"/><rect x="85.5" y="16.8" width="0.7" height="5.2" fill="#f56a12" opacity="0.8"/><rect x="90.0" y="16.8" width="0.7" height="5.2" fill="#f56a12" opacity="0.8"/><rect x="100.5" y="17.4" width="0.7" height="4.0" fill="#f56a12" opacity="0.8"/><rect x="105.0" y="17.4" width="0.7" height="4.0" fill="#f56a12" opacity="0.8"/><rect x="115.5" y="17.4" width="0.7" height="4.0" fill="#f56a12" opacity="0.8"/><rect x="120.0" y="17.8" width="0.7" height="3.2" fill="#f56a12" opacity="0.8"/></svg><span class="n">Space Arp 02</span></div>
<div class="clip" style="left:721.85px;top:92.9px;width:78.00px;height:32.1px;background:#a04a17"><div class="h" style="background:#8a3c14"></div><div style="left:0;top:0;width:0.5px;height:100%;background:rgba(0,0,0,0.28)"></div><svg style="left:0;top:0" width="78.3" height="32.1" viewBox="0 0 78.3 32.1"><rect x="0" y="18.5" width="78.3" height="1.8" fill="#f56a12"/><rect x="0.0" y="16.8" width="0.7" height="5.2" fill="#f56a12" opacity="0.8"/><rect x="10.5" y="18.0" width="0.7" height="2.8" fill="#f56a12" opacity="0.8"/><rect x="15.0" y="16.8" width="0.7" height="5.2" fill="#f56a12" opacity="0.8"/><rect x="25.5" y="18.0" width="0.7" height="2.8" fill="#f56a12" opacity="0.8"/><rect x="30.0" y="16.8" width="0.7" height="5.2" fill="#f56a12" opacity="0.8"/><rect x="40.5" y="17.8" width="0.7" height="3.2" fill="#f56a12" opacity="0.8"/><rect x="45.0" y="17.8" width="0.7" height="3.2" fill="#f56a12" opacity="0.8"/><rect x="55.5" y="18.0" width="0.7" height="2.8" fill="#f56a12" opacity="0.8"/><rect x="60.0" y="17.4" width="0.7" height="4.0" fill="#f56a12" opacity="0.8"/><rect x="70.5" y="16.8" width="0.7" height="5.2" fill="#f56a12" opacity="0.8"/><rect x="75.0" y="17.4" width="0.7" height="4.0" fill="#f56a12" opacity="0.8"/><rect x="85.5" y="18.0" width="0.7" height="2.8" fill="#f56a12" opacity="0.8"/><rect x="90.0" y="18.0" width="0.7" height="2.8" fill="#f56a12" opacity="0.8"/><rect x="100.5" y="17.8" width="0.7" height="3.2" fill="#f56a12" opacity="0.8"/><rect x="105.0" y="17.8" width="0.7" height="3.2" fill="#f56a12" opacity="0.8"/><rect x="115.5" y="16.8" width="0.7" height="5.2" fill="#f56a12" opacity="0.8"/><rect x="120.0" y="16.8" width="0.7" height="5.2" fill="#f56a12" opacity="0.8"/></svg><span class="n">Space Arp 02</span></div>
<div class="clip" style="left:121.85px;top:127.1px;width:239.70px;height:32.1px;background:#13825c"><div class="h" style="background:#0e6a4d"></div><div style="left:0;top:0;width:0.5px;height:100%;background:rgba(0,0,0,0.28)"></div><svg style="left:0;top:0" width="240.0" height="32.1" viewBox="0 0 240.0 32.1"><rect x="0.3" y="8.0" width="29.4" height="1" fill="#20c58c"/><rect x="0.3" y="15.7" width="29.4" height="1" fill="#20c58c"/><rect x="0.3" y="22.9" width="29.4" height="1" fill="#20c58c"/><rect x="30.3" y="9.1" width="29.4" height="1" fill="#20c58c"/><rect x="30.3" y="18.1" width="29.4" height="1" fill="#20c58c"/><rect x="30.3" y="24.7" width="29.4" height="1" fill="#20c58c"/><rect x="60.3" y="11.2" width="29.4" height="1" fill="#20c58c"/><rect x="60.3" y="19.8" width="29.4" height="1" fill="#20c58c"/><rect x="60.3" y="27.1" width="29.4" height="1" fill="#20c58c"/><rect x="90.3" y="14.5" width="14.4" height="1" fill="#20c58c"/><rect x="90.3" y="23.5" width="14.4" height="1" fill="#20c58c"/><rect x="90.3" y="29.8" width="14.4" height="1" fill="#20c58c"/><rect x="105.3" y="13.0" width="14.4" height="1" fill="#20c58c"/><rect x="105.3" y="21.1" width="14.4" height="1" fill="#20c58c"/><rect x="105.3" y="27.8" width="14.4" height="1" fill="#20c58c"/><rect x="120.3" y="8.0" width="29.4" height="1" fill="#20c58c"/><rect x="120.3" y="15.7" width="29.4" height="1" fill="#20c58c"/><rect x="120.3" y="22.9" width="29.4" height="1" fill="#20c58c"/><rect x="150.3" y="9.1" width="29.4" height="1" fill="#20c58c"/><rect x="150.3" y="18.1" width="29.4" height="1" fill="#20c58c"/><rect x="150.3" y="24.7" width="29.4" height="1" fill="#20c58c"/><rect x="180.3" y="11.2" width="29.4" height="1" fill="#20c58c"/><rect x="180.3" y="19.8" width="29.4" height="1" fill="#20c58c"/><rect x="180.3" y="27.1" width="29.4" height="1" fill="#20c58c"/><rect x="210.3" y="14.5" width="14.4" height="1" fill="#20c58c"/><rect x="210.3" y="23.5" width="14.4" height="1" fill="#20c58c"/><rect x="210.3" y="29.8" width="14.4" height="1" fill="#20c58c"/><rect x="225.3" y="13.0" width="14.4" height="1" fill="#20c58c"/><rect x="225.3" y="21.1" width="14.4" height="1" fill="#20c58c"/><rect x="225.3" y="27.8" width="14.4" height="1" fill="#20c58c"/></svg><span class="n">Acoustic Grand Piano 2</span></div>
<div class="clip" style="left:121.85px;top:161.3px;width:239.70px;height:32.1px;background:#b02a1e"><div class="h" style="background:#8d201a"></div><div style="left:0;top:0;width:0.5px;height:100%;background:rgba(0,0,0,0.28)"></div><svg style="left:0;top:0" width="240.0" height="32.1" viewBox="0 0 240.0 32.1"><rect x="0.3" y="7.5" width="29.4" height="1" fill="#f23c29"/><rect x="0.3" y="13.7" width="29.4" height="1" fill="#f23c29"/><rect x="0.3" y="20.1" width="29.4" height="1" fill="#f23c29"/><rect x="0.3" y="25.1" width="29.4" height="1" fill="#f23c29"/><rect x="30.3" y="8.5" width="29.4" height="1" fill="#f23c29"/><rect x="30.3" y="14.9" width="29.4" height="1" fill="#f23c29"/><rect x="30.3" y="21.3" width="29.4" height="1" fill="#f23c29"/><rect x="30.3" y="26.5" width="29.4" height="1" fill="#f23c29"/><rect x="60.3" y="9.7" width="29.4" height="1" fill="#f23c29"/><rect x="60.3" y="16.7" width="29.4" height="1" fill="#f23c29"/><rect x="60.3" y="23.1" width="29.4" height="1" fill="#f23c29"/><rect x="60.3" y="28.1" width="29.4" height="1" fill="#f23c29"/><rect x="90.3" y="12.1" width="14.4" height="1" fill="#f23c29"/><rect x="90.3" y="19.3" width="14.4" height="1" fill="#f23c29"/><rect x="90.3" y="24.5" width="14.4" height="1" fill="#f23c29"/><rect x="90.3" y="29.5" width="14.4" height="1" fill="#f23c29"/><rect x="105.3" y="10.9" width="14.4" height="1" fill="#f23c29"/><rect x="105.3" y="17.7" width="14.4" height="1" fill="#f23c29"/><rect x="105.3" y="23.7" width="14.4" height="1" fill="#f23c29"/><rect x="105.3" y="28.7" width="14.4" height="1" fill="#f23c29"/><rect x="120.3" y="7.5" width="29.4" height="1" fill="#f23c29"/><rect x="120.3" y="13.7" width="29.4" height="1" fill="#f23c29"/><rect x="120.3" y="20.1" width="29.4" height="1" fill="#f23c29"/><rect x="120.3" y="25.1" width="29.4" height="1" fill="#f23c29"/><rect x="150.3" y="8.5" width="29.4" height="1" fill="#f23c29"/><rect x="150.3" y="14.9" width="29.4" height="1" fill="#f23c29"/><rect x="150.3" y="21.3" width="29.4" height="1" fill="#f23c29"/><rect x="150.3" y="26.5" width="29.4" height="1" fill="#f23c29"/><rect x="180.3" y="9.7" width="29.4" height="1" fill="#f23c29"/><rect x="180.3" y="16.7" width="29.4" height="1" fill="#f23c29"/><rect x="180.3" y="23.1" width="29.4" height="1" fill="#f23c29"/><rect x="180.3" y="28.1" width="29.4" height="1" fill="#f23c29"/><rect x="210.3" y="12.1" width="14.4" height="1" fill="#f23c29"/><rect x="210.3" y="19.3" width="14.4" height="1" fill="#f23c29"/><rect x="210.3" y="24.5" width="14.4" height="1" fill="#f23c29"/><rect x="210.3" y="29.5" width="14.4" height="1" fill="#f23c29"/><rect x="225.3" y="10.9" width="14.4" height="1" fill="#f23c29"/><rect x="225.3" y="17.7" width="14.4" height="1" fill="#f23c29"/><rect x="225.3" y="23.7" width="14.4" height="1" fill="#f23c29"/><rect x="225.3" y="28.7" width="14.4" height="1" fill="#f23c29"/></svg><span class="n">Piano</span></div>
<div class="clip" style="left:361.85px;top:195.5px;width:119.70px;height:32.1px;background:#215ea2"><div class="h" style="background:#1c4d88"></div><div style="left:0;top:0;width:0.5px;height:100%;background:rgba(0,0,0,0.28)"></div><svg style="left:0;top:0" width="120.0" height="32.1" viewBox="0 0 120.0 32.1"><path d="M0.0 18.7 L0.8 17.7 L1.5 16.1 L2.2 14.5 L3.0 13.4 L3.8 13.0 L4.5 13.4 L5.2 14.5 L6.0 16.1 L6.8 17.7 L7.5 18.7 L7.5 18.7 L8.2 17.7 L9.0 16.1 L9.8 14.5 L10.5 13.4 L11.2 13.0 L12.0 13.4 L12.8 14.5 L13.5 16.1 L14.2 17.7 L15.0 18.7 L15.0 18.7 L15.8 17.7 L16.5 16.1 L17.2 14.5 L18.0 13.4 L18.8 13.0 L19.5 13.4 L20.2 14.5 L21.0 16.1 L21.8 17.7 L22.5 18.7 L22.5 18.7 L23.2 17.7 L24.0 16.1 L24.8 14.5 L25.5 13.4 L26.2 13.0 L27.0 13.4 L27.8 14.5 L28.5 16.1 L29.2 17.7 L30.0 18.7 L30.0 18.7 L30.7 18.0 L31.5 16.9 L32.2 15.8 L33.0 15.0 L33.8 14.8 L34.5 15.0 L35.2 15.8 L36.0 16.9 L36.8 18.0 L37.5 18.7 L37.5 18.7 L38.2 18.1 L39.0 17.2 L39.8 16.2 L40.5 15.6 L41.2 15.4 L42.0 15.6 L42.8 16.2 L43.5 17.2 L44.2 18.1 L45.0 18.7 L45.0 18.7 L45.8 18.0 L46.5 16.9 L47.2 15.8 L48.0 15.0 L48.8 14.8 L49.5 15.0 L50.2 15.8 L51.0 16.9 L51.8 18.0 L52.5 18.7 L52.5 18.7 L53.2 18.1 L54.0 17.2 L54.8 16.2 L55.5 15.6 L56.2 15.4 L57.0 15.6 L57.8 16.2 L58.5 17.2 L59.2 18.1 L60.0 18.7 L60.0 18.7 L60.8 18.0 L61.5 16.9 L62.3 15.8 L63.0 15.0 L63.8 14.8 L64.5 15.0 L65.2 15.8 L66.0 16.9 L66.8 18.0 L67.5 18.7 L67.5 18.7 L68.2 18.1 L69.0 17.2 L69.8 16.2 L70.5 15.6 L71.2 15.4 L72.0 15.6 L72.8 16.2 L73.5 17.2 L74.2 18.1 L75.0 18.7 L75.0 18.7 L75.8 18.0 L76.5 16.9 L77.2 15.8 L78.0 15.0 L78.8 14.8 L79.5 15.0 L80.2 15.8 L81.0 16.9 L81.8 18.0 L82.5 18.7 L82.5 18.7 L83.2 18.1 L84.0 17.2 L84.8 16.2 L85.5 15.6 L86.2 15.4 L87.0 15.6 L87.8 16.2 L88.5 17.2 L89.2 18.1 L90.0 18.7 L90.0 18.7 L90.8 18.0 L91.5 16.9 L92.2 15.8 L93.0 15.0 L93.8 14.8 L94.5 15.0 L95.2 15.8 L96.0 16.9 L96.8 18.0 L97.5 18.7 L97.5 18.7 L98.2 18.1 L99.0 17.2 L99.8 16.2 L100.5 15.6 L101.2 15.4 L102.0 15.6 L102.8 16.2 L103.5 17.2 L104.2 18.1 L105.0 18.7 L105.0 18.7 L105.8 18.0 L106.5 16.9 L107.2 15.8 L108.0 15.0 L108.8 14.8 L109.5 15.0 L110.2 15.8 L111.0 16.9 L111.8 18.0 L112.5 18.7 L112.5 18.7 L113.2 18.1 L114.0 17.2 L114.8 16.2 L115.5 15.6 L116.2 15.4 L117.0 15.6 L117.8 16.2 L118.5 17.2 L119.2 18.1 L120.0 18.7 L120.0 20.1 L119.2 20.6 L118.5 21.5 L117.8 22.5 L117.0 23.1 L116.2 23.4 L115.5 23.1 L114.8 22.5 L114.0 21.5 L113.2 20.6 L112.5 20.1 L112.5 20.1 L111.8 20.7 L111.0 21.8 L110.2 22.9 L109.5 23.7 L108.8 24.0 L108.0 23.7 L107.2 22.9 L106.5 21.8 L105.8 20.7 L105.0 20.1 L105.0 20.1 L104.2 20.6 L103.5 21.5 L102.8 22.5 L102.0 23.1 L101.2 23.4 L100.5 23.1 L99.8 22.5 L99.0 21.5 L98.2 20.6 L97.5 20.1 L97.5 20.1 L96.8 20.7 L96.0 21.8 L95.2 22.9 L94.5 23.7 L93.8 24.0 L93.0 23.7 L92.2 22.9 L91.5 21.8 L90.8 20.7 L90.0 20.1 L90.0 20.1 L89.2 20.6 L88.5 21.5 L87.8 22.5 L87.0 23.1 L86.2 23.4 L85.5 23.1 L84.8 22.5 L84.0 21.5 L83.2 20.6 L82.5 20.1 L82.5 20.1 L81.8 20.7 L81.0 21.8 L80.2 22.9 L79.5 23.7 L78.8 24.0 L78.0 23.7 L77.2 22.9 L76.5 21.8 L75.8 20.7 L75.0 20.1 L75.0 20.1 L74.2 20.6 L73.5 21.5 L72.8 22.5 L72.0 23.1 L71.2 23.4 L70.5 23.1 L69.8 22.5 L69.0 21.5 L68.2 20.6 L67.5 20.1 L67.5 20.1 L66.8 20.7 L66.0 21.8 L65.2 22.9 L64.5 23.7 L63.8 24.0 L63.0 23.7 L62.3 22.9 L61.5 21.8 L60.8 20.7 L60.0 20.1 L60.0 20.1 L59.2 20.6 L58.5 21.5 L57.8 22.5 L57.0 23.1 L56.2 23.4 L55.5 23.1 L54.8 22.5 L54.0 21.5 L53.2 20.6 L52.5 20.1 L52.5 20.1 L51.8 20.7 L51.0 21.8 L50.2 22.9 L49.5 23.7 L48.8 24.0 L48.0 23.7 L47.2 22.9 L46.5 21.8 L45.8 20.7 L45.0 20.1 L45.0 20.1 L44.2 20.6 L43.5 21.5 L42.8 22.5 L42.0 23.1 L41.2 23.4 L40.5 23.1 L39.8 22.5 L39.0 21.5 L38.2 20.6 L37.5 20.1 L37.5 20.1 L36.8 20.7 L36.0 21.8 L35.2 22.9 L34.5 23.7 L33.8 24.0 L33.0 23.7 L32.2 22.9 L31.5 21.8 L30.7 20.7 L30.0 20.1 L30.0 20.1 L29.2 21.0 L28.5 22.6 L27.8 24.2 L27.0 25.3 L26.2 25.8 L25.5 25.3 L24.8 24.2 L24.0 22.6 L23.2 21.0 L22.5 20.1 L22.5 20.1 L21.8 21.0 L21.0 22.6 L20.2 24.2 L19.5 25.3 L18.8 25.8 L18.0 25.3 L17.2 24.2 L16.5 22.6 L15.8 21.0 L15.0 20.1 L15.0 20.1 L14.2 21.0 L13.5 22.6 L12.8 24.2 L12.0 25.3 L11.2 25.8 L10.5 25.3 L9.8 24.2 L9.0 22.6 L8.2 21.0 L7.5 20.1 L7.5 20.1 L6.8 21.0 L6.0 22.6 L5.2 24.2 L4.5 25.3 L3.8 25.8 L3.0 25.3 L2.2 24.2 L1.5 22.6 L0.8 21.0 L0.0 20.1Z" fill="#3797ff"/></svg><span class="n">Organic Pulse Bass 04</span></div>
<div class="clip" style="left:481.85px;top:195.5px;width:119.70px;height:32.1px;background:#215ea2"><div class="h" style="background:#1c4d88"></div><div style="left:0;top:0;width:0.5px;height:100%;background:rgba(0,0,0,0.28)"></div><svg style="left:0;top:0" width="120.0" height="32.1" viewBox="0 0 120.0 32.1"><path d="M0.0 18.7 L0.8 17.7 L1.5 16.1 L2.2 14.5 L3.0 13.4 L3.8 13.0 L4.5 13.4 L5.2 14.5 L6.0 16.1 L6.8 17.7 L7.5 18.7 L7.5 18.7 L8.2 17.7 L9.0 16.1 L9.8 14.5 L10.5 13.4 L11.2 13.0 L12.0 13.4 L12.8 14.5 L13.5 16.1 L14.2 17.7 L15.0 18.7 L15.0 18.7 L15.8 17.7 L16.5 16.1 L17.2 14.5 L18.0 13.4 L18.8 13.0 L19.5 13.4 L20.2 14.5 L21.0 16.1 L21.8 17.7 L22.5 18.7 L22.5 18.7 L23.2 17.7 L24.0 16.1 L24.8 14.5 L25.5 13.4 L26.2 13.0 L27.0 13.4 L27.8 14.5 L28.5 16.1 L29.2 17.7 L30.0 18.7 L30.0 18.7 L30.7 18.0 L31.5 16.9 L32.2 15.8 L33.0 15.0 L33.8 14.8 L34.5 15.0 L35.2 15.8 L36.0 16.9 L36.8 18.0 L37.5 18.7 L37.5 18.7 L38.2 18.1 L39.0 17.2 L39.8 16.2 L40.5 15.6 L41.2 15.4 L42.0 15.6 L42.8 16.2 L43.5 17.2 L44.2 18.1 L45.0 18.7 L45.0 18.7 L45.8 18.0 L46.5 16.9 L47.2 15.8 L48.0 15.0 L48.8 14.8 L49.5 15.0 L50.2 15.8 L51.0 16.9 L51.8 18.0 L52.5 18.7 L52.5 18.7 L53.2 18.1 L54.0 17.2 L54.8 16.2 L55.5 15.6 L56.2 15.4 L57.0 15.6 L57.8 16.2 L58.5 17.2 L59.2 18.1 L60.0 18.7 L60.0 18.7 L60.8 18.0 L61.5 16.9 L62.3 15.8 L63.0 15.0 L63.8 14.8 L64.5 15.0 L65.2 15.8 L66.0 16.9 L66.8 18.0 L67.5 18.7 L67.5 18.7 L68.2 18.1 L69.0 17.2 L69.8 16.2 L70.5 15.6 L71.2 15.4 L72.0 15.6 L72.8 16.2 L73.5 17.2 L74.2 18.1 L75.0 18.7 L75.0 18.7 L75.8 18.0 L76.5 16.9 L77.2 15.8 L78.0 15.0 L78.8 14.8 L79.5 15.0 L80.2 15.8 L81.0 16.9 L81.8 18.0 L82.5 18.7 L82.5 18.7 L83.2 18.1 L84.0 17.2 L84.8 16.2 L85.5 15.6 L86.2 15.4 L87.0 15.6 L87.8 16.2 L88.5 17.2 L89.2 18.1 L90.0 18.7 L90.0 18.7 L90.8 18.0 L91.5 16.9 L92.2 15.8 L93.0 15.0 L93.8 14.8 L94.5 15.0 L95.2 15.8 L96.0 16.9 L96.8 18.0 L97.5 18.7 L97.5 18.7 L98.2 18.1 L99.0 17.2 L99.8 16.2 L100.5 15.6 L101.2 15.4 L102.0 15.6 L102.8 16.2 L103.5 17.2 L104.2 18.1 L105.0 18.7 L105.0 18.7 L105.8 18.0 L106.5 16.9 L107.2 15.8 L108.0 15.0 L108.8 14.8 L109.5 15.0 L110.2 15.8 L111.0 16.9 L111.8 18.0 L112.5 18.7 L112.5 18.7 L113.2 18.1 L114.0 17.2 L114.8 16.2 L115.5 15.6 L116.2 15.4 L117.0 15.6 L117.8 16.2 L118.5 17.2 L119.2 18.1 L120.0 18.7 L120.0 20.1 L119.2 20.6 L118.5 21.5 L117.8 22.5 L117.0 23.1 L116.2 23.4 L115.5 23.1 L114.8 22.5 L114.0 21.5 L113.2 20.6 L112.5 20.1 L112.5 20.1 L111.8 20.7 L111.0 21.8 L110.2 22.9 L109.5 23.7 L108.8 24.0 L108.0 23.7 L107.2 22.9 L106.5 21.8 L105.8 20.7 L105.0 20.1 L105.0 20.1 L104.2 20.6 L103.5 21.5 L102.8 22.5 L102.0 23.1 L101.2 23.4 L100.5 23.1 L99.8 22.5 L99.0 21.5 L98.2 20.6 L97.5 20.1 L97.5 20.1 L96.8 20.7 L96.0 21.8 L95.2 22.9 L94.5 23.7 L93.8 24.0 L93.0 23.7 L92.2 22.9 L91.5 21.8 L90.8 20.7 L90.0 20.1 L90.0 20.1 L89.2 20.6 L88.5 21.5 L87.8 22.5 L87.0 23.1 L86.2 23.4 L85.5 23.1 L84.8 22.5 L84.0 21.5 L83.2 20.6 L82.5 20.1 L82.5 20.1 L81.8 20.7 L81.0 21.8 L80.2 22.9 L79.5 23.7 L78.8 24.0 L78.0 23.7 L77.2 22.9 L76.5 21.8 L75.8 20.7 L75.0 20.1 L75.0 20.1 L74.2 20.6 L73.5 21.5 L72.8 22.5 L72.0 23.1 L71.2 23.4 L70.5 23.1 L69.8 22.5 L69.0 21.5 L68.2 20.6 L67.5 20.1 L67.5 20.1 L66.8 20.7 L66.0 21.8 L65.2 22.9 L64.5 23.7 L63.8 24.0 L63.0 23.7 L62.3 22.9 L61.5 21.8 L60.8 20.7 L60.0 20.1 L60.0 20.1 L59.2 20.6 L58.5 21.5 L57.8 22.5 L57.0 23.1 L56.2 23.4 L55.5 23.1 L54.8 22.5 L54.0 21.5 L53.2 20.6 L52.5 20.1 L52.5 20.1 L51.8 20.7 L51.0 21.8 L50.2 22.9 L49.5 23.7 L48.8 24.0 L48.0 23.7 L47.2 22.9 L46.5 21.8 L45.8 20.7 L45.0 20.1 L45.0 20.1 L44.2 20.6 L43.5 21.5 L42.8 22.5 L42.0 23.1 L41.2 23.4 L40.5 23.1 L39.8 22.5 L39.0 21.5 L38.2 20.6 L37.5 20.1 L37.5 20.1 L36.8 20.7 L36.0 21.8 L35.2 22.9 L34.5 23.7 L33.8 24.0 L33.0 23.7 L32.2 22.9 L31.5 21.8 L30.7 20.7 L30.0 20.1 L30.0 20.1 L29.2 21.0 L28.5 22.6 L27.8 24.2 L27.0 25.3 L26.2 25.8 L25.5 25.3 L24.8 24.2 L24.0 22.6 L23.2 21.0 L22.5 20.1 L22.5 20.1 L21.8 21.0 L21.0 22.6 L20.2 24.2 L19.5 25.3 L18.8 25.8 L18.0 25.3 L17.2 24.2 L16.5 22.6 L15.8 21.0 L15.0 20.1 L15.0 20.1 L14.2 21.0 L13.5 22.6 L12.8 24.2 L12.0 25.3 L11.2 25.8 L10.5 25.3 L9.8 24.2 L9.0 22.6 L8.2 21.0 L7.5 20.1 L7.5 20.1 L6.8 21.0 L6.0 22.6 L5.2 24.2 L4.5 25.3 L3.8 25.8 L3.0 25.3 L2.2 24.2 L1.5 22.6 L0.8 21.0 L0.0 20.1Z" fill="#3797ff"/></svg><span class="n">Organic Pulse Bass 04</span></div>
<div class="clip" style="left:601.85px;top:195.5px;width:119.70px;height:32.1px;background:#215ea2"><div class="h" style="background:#1c4d88"></div><div style="left:0;top:0;width:0.5px;height:100%;background:rgba(0,0,0,0.28)"></div><svg style="left:0;top:0" width="120.0" height="32.1" viewBox="0 0 120.0 32.1"><path d="M0.0 18.7 L0.8 17.7 L1.5 16.1 L2.2 14.5 L3.0 13.4 L3.8 13.0 L4.5 13.4 L5.2 14.5 L6.0 16.1 L6.8 17.7 L7.5 18.7 L7.5 18.7 L8.2 17.7 L9.0 16.1 L9.8 14.5 L10.5 13.4 L11.2 13.0 L12.0 13.4 L12.8 14.5 L13.5 16.1 L14.2 17.7 L15.0 18.7 L15.0 18.7 L15.8 17.7 L16.5 16.1 L17.2 14.5 L18.0 13.4 L18.8 13.0 L19.5 13.4 L20.2 14.5 L21.0 16.1 L21.8 17.7 L22.5 18.7 L22.5 18.7 L23.2 17.7 L24.0 16.1 L24.8 14.5 L25.5 13.4 L26.2 13.0 L27.0 13.4 L27.8 14.5 L28.5 16.1 L29.2 17.7 L30.0 18.7 L30.0 18.7 L30.7 18.0 L31.5 16.9 L32.2 15.8 L33.0 15.0 L33.8 14.8 L34.5 15.0 L35.2 15.8 L36.0 16.9 L36.8 18.0 L37.5 18.7 L37.5 18.7 L38.2 18.1 L39.0 17.2 L39.8 16.2 L40.5 15.6 L41.2 15.4 L42.0 15.6 L42.8 16.2 L43.5 17.2 L44.2 18.1 L45.0 18.7 L45.0 18.7 L45.8 18.0 L46.5 16.9 L47.2 15.8 L48.0 15.0 L48.8 14.8 L49.5 15.0 L50.2 15.8 L51.0 16.9 L51.8 18.0 L52.5 18.7 L52.5 18.7 L53.2 18.1 L54.0 17.2 L54.8 16.2 L55.5 15.6 L56.2 15.4 L57.0 15.6 L57.8 16.2 L58.5 17.2 L59.2 18.1 L60.0 18.7 L60.0 18.7 L60.8 18.0 L61.5 16.9 L62.3 15.8 L63.0 15.0 L63.8 14.8 L64.5 15.0 L65.2 15.8 L66.0 16.9 L66.8 18.0 L67.5 18.7 L67.5 18.7 L68.2 18.1 L69.0 17.2 L69.8 16.2 L70.5 15.6 L71.2 15.4 L72.0 15.6 L72.8 16.2 L73.5 17.2 L74.2 18.1 L75.0 18.7 L75.0 18.7 L75.8 18.0 L76.5 16.9 L77.2 15.8 L78.0 15.0 L78.8 14.8 L79.5 15.0 L80.2 15.8 L81.0 16.9 L81.8 18.0 L82.5 18.7 L82.5 18.7 L83.2 18.1 L84.0 17.2 L84.8 16.2 L85.5 15.6 L86.2 15.4 L87.0 15.6 L87.8 16.2 L88.5 17.2 L89.2 18.1 L90.0 18.7 L90.0 18.7 L90.8 18.0 L91.5 16.9 L92.2 15.8 L93.0 15.0 L93.8 14.8 L94.5 15.0 L95.2 15.8 L96.0 16.9 L96.8 18.0 L97.5 18.7 L97.5 18.7 L98.2 18.1 L99.0 17.2 L99.8 16.2 L100.5 15.6 L101.2 15.4 L102.0 15.6 L102.8 16.2 L103.5 17.2 L104.2 18.1 L105.0 18.7 L105.0 18.7 L105.8 18.0 L106.5 16.9 L107.2 15.8 L108.0 15.0 L108.8 14.8 L109.5 15.0 L110.2 15.8 L111.0 16.9 L111.8 18.0 L112.5 18.7 L112.5 18.7 L113.2 18.1 L114.0 17.2 L114.8 16.2 L115.5 15.6 L116.2 15.4 L117.0 15.6 L117.8 16.2 L118.5 17.2 L119.2 18.1 L120.0 18.7 L120.0 20.1 L119.2 20.6 L118.5 21.5 L117.8 22.5 L117.0 23.1 L116.2 23.4 L115.5 23.1 L114.8 22.5 L114.0 21.5 L113.2 20.6 L112.5 20.1 L112.5 20.1 L111.8 20.7 L111.0 21.8 L110.2 22.9 L109.5 23.7 L108.8 24.0 L108.0 23.7 L107.2 22.9 L106.5 21.8 L105.8 20.7 L105.0 20.1 L105.0 20.1 L104.2 20.6 L103.5 21.5 L102.8 22.5 L102.0 23.1 L101.2 23.4 L100.5 23.1 L99.8 22.5 L99.0 21.5 L98.2 20.6 L97.5 20.1 L97.5 20.1 L96.8 20.7 L96.0 21.8 L95.2 22.9 L94.5 23.7 L93.8 24.0 L93.0 23.7 L92.2 22.9 L91.5 21.8 L90.8 20.7 L90.0 20.1 L90.0 20.1 L89.2 20.6 L88.5 21.5 L87.8 22.5 L87.0 23.1 L86.2 23.4 L85.5 23.1 L84.8 22.5 L84.0 21.5 L83.2 20.6 L82.5 20.1 L82.5 20.1 L81.8 20.7 L81.0 21.8 L80.2 22.9 L79.5 23.7 L78.8 24.0 L78.0 23.7 L77.2 22.9 L76.5 21.8 L75.8 20.7 L75.0 20.1 L75.0 20.1 L74.2 20.6 L73.5 21.5 L72.8 22.5 L72.0 23.1 L71.2 23.4 L70.5 23.1 L69.8 22.5 L69.0 21.5 L68.2 20.6 L67.5 20.1 L67.5 20.1 L66.8 20.7 L66.0 21.8 L65.2 22.9 L64.5 23.7 L63.8 24.0 L63.0 23.7 L62.3 22.9 L61.5 21.8 L60.8 20.7 L60.0 20.1 L60.0 20.1 L59.2 20.6 L58.5 21.5 L57.8 22.5 L57.0 23.1 L56.2 23.4 L55.5 23.1 L54.8 22.5 L54.0 21.5 L53.2 20.6 L52.5 20.1 L52.5 20.1 L51.8 20.7 L51.0 21.8 L50.2 22.9 L49.5 23.7 L48.8 24.0 L48.0 23.7 L47.2 22.9 L46.5 21.8 L45.8 20.7 L45.0 20.1 L45.0 20.1 L44.2 20.6 L43.5 21.5 L42.8 22.5 L42.0 23.1 L41.2 23.4 L40.5 23.1 L39.8 22.5 L39.0 21.5 L38.2 20.6 L37.5 20.1 L37.5 20.1 L36.8 20.7 L36.0 21.8 L35.2 22.9 L34.5 23.7 L33.8 24.0 L33.0 23.7 L32.2 22.9 L31.5 21.8 L30.7 20.7 L30.0 20.1 L30.0 20.1 L29.2 21.0 L28.5 22.6 L27.8 24.2 L27.0 25.3 L26.2 25.8 L25.5 25.3 L24.8 24.2 L24.0 22.6 L23.2 21.0 L22.5 20.1 L22.5 20.1 L21.8 21.0 L21.0 22.6 L20.2 24.2 L19.5 25.3 L18.8 25.8 L18.0 25.3 L17.2 24.2 L16.5 22.6 L15.8 21.0 L15.0 20.1 L15.0 20.1 L14.2 21.0 L13.5 22.6 L12.8 24.2 L12.0 25.3 L11.2 25.8 L10.5 25.3 L9.8 24.2 L9.0 22.6 L8.2 21.0 L7.5 20.1 L7.5 20.1 L6.8 21.0 L6.0 22.6 L5.2 24.2 L4.5 25.3 L3.8 25.8 L3.0 25.3 L2.2 24.2 L1.5 22.6 L0.8 21.0 L0.0 20.1Z" fill="#3797ff"/></svg><span class="n">Organic Pulse Bass 04</span></div>
<div class="clip" style="left:721.85px;top:195.5px;width:78.00px;height:32.1px;background:#215ea2"><div class="h" style="background:#1c4d88"></div><div style="left:0;top:0;width:0.5px;height:100%;background:rgba(0,0,0,0.28)"></div><svg style="left:0;top:0" width="78.3" height="32.1" viewBox="0 0 78.3 32.1"><path d="M0.0 18.7 L0.8 17.7 L1.5 16.1 L2.2 14.5 L3.0 13.4 L3.8 13.0 L4.5 13.4 L5.2 14.5 L6.0 16.1 L6.8 17.7 L7.5 18.7 L7.5 18.7 L8.2 17.7 L9.0 16.1 L9.8 14.5 L10.5 13.4 L11.2 13.0 L12.0 13.4 L12.8 14.5 L13.5 16.1 L14.2 17.7 L15.0 18.7 L15.0 18.7 L15.8 17.7 L16.5 16.1 L17.2 14.5 L18.0 13.4 L18.8 13.0 L19.5 13.4 L20.2 14.5 L21.0 16.1 L21.8 17.7 L22.5 18.7 L22.5 18.7 L23.2 17.7 L24.0 16.1 L24.8 14.5 L25.5 13.4 L26.2 13.0 L27.0 13.4 L27.8 14.5 L28.5 16.1 L29.2 17.7 L30.0 18.7 L30.0 18.7 L30.7 18.0 L31.5 16.9 L32.2 15.8 L33.0 15.0 L33.8 14.8 L34.5 15.0 L35.2 15.8 L36.0 16.9 L36.8 18.0 L37.5 18.7 L37.5 18.7 L38.2 18.1 L39.0 17.2 L39.8 16.2 L40.5 15.6 L41.2 15.4 L42.0 15.6 L42.8 16.2 L43.5 17.2 L44.2 18.1 L45.0 18.7 L45.0 18.7 L45.8 18.0 L46.5 16.9 L47.2 15.8 L48.0 15.0 L48.8 14.8 L49.5 15.0 L50.2 15.8 L51.0 16.9 L51.8 18.0 L52.5 18.7 L52.5 18.7 L53.2 18.1 L54.0 17.2 L54.8 16.2 L55.5 15.6 L56.2 15.4 L57.0 15.6 L57.8 16.2 L58.5 17.2 L59.2 18.1 L60.0 18.7 L60.0 18.7 L60.8 18.0 L61.5 16.9 L62.3 15.8 L63.0 15.0 L63.8 14.8 L64.5 15.0 L65.2 15.8 L66.0 16.9 L66.8 18.0 L67.5 18.7 L67.5 18.7 L68.2 18.1 L69.0 17.2 L69.8 16.2 L70.5 15.6 L71.2 15.4 L72.0 15.6 L72.8 16.2 L73.5 17.2 L74.2 18.1 L75.0 18.7 L75.0 18.7 L75.8 18.0 L76.5 16.9 L77.2 15.8 L78.0 15.0 L78.8 14.8 L79.5 15.0 L80.2 15.8 L81.0 16.9 L81.8 18.0 L82.5 18.7 L82.5 18.7 L83.2 18.1 L84.0 17.2 L84.8 16.2 L85.5 15.6 L86.2 15.4 L87.0 15.6 L87.8 16.2 L88.5 17.2 L89.2 18.1 L90.0 18.7 L90.0 18.7 L90.8 18.0 L91.5 16.9 L92.2 15.8 L93.0 15.0 L93.8 14.8 L94.5 15.0 L95.2 15.8 L96.0 16.9 L96.8 18.0 L97.5 18.7 L97.5 18.7 L98.2 18.1 L99.0 17.2 L99.8 16.2 L100.5 15.6 L101.2 15.4 L102.0 15.6 L102.8 16.2 L103.5 17.2 L104.2 18.1 L105.0 18.7 L105.0 18.7 L105.8 18.0 L106.5 16.9 L107.2 15.8 L108.0 15.0 L108.8 14.8 L109.5 15.0 L110.2 15.8 L111.0 16.9 L111.8 18.0 L112.5 18.7 L112.5 18.7 L113.2 18.1 L114.0 17.2 L114.8 16.2 L115.5 15.6 L116.2 15.4 L117.0 15.6 L117.8 16.2 L118.5 17.2 L119.2 18.1 L120.0 18.7 L120.0 20.1 L119.2 20.6 L118.5 21.5 L117.8 22.5 L117.0 23.1 L116.2 23.4 L115.5 23.1 L114.8 22.5 L114.0 21.5 L113.2 20.6 L112.5 20.1 L112.5 20.1 L111.8 20.7 L111.0 21.8 L110.2 22.9 L109.5 23.7 L108.8 24.0 L108.0 23.7 L107.2 22.9 L106.5 21.8 L105.8 20.7 L105.0 20.1 L105.0 20.1 L104.2 20.6 L103.5 21.5 L102.8 22.5 L102.0 23.1 L101.2 23.4 L100.5 23.1 L99.8 22.5 L99.0 21.5 L98.2 20.6 L97.5 20.1 L97.5 20.1 L96.8 20.7 L96.0 21.8 L95.2 22.9 L94.5 23.7 L93.8 24.0 L93.0 23.7 L92.2 22.9 L91.5 21.8 L90.8 20.7 L90.0 20.1 L90.0 20.1 L89.2 20.6 L88.5 21.5 L87.8 22.5 L87.0 23.1 L86.2 23.4 L85.5 23.1 L84.8 22.5 L84.0 21.5 L83.2 20.6 L82.5 20.1 L82.5 20.1 L81.8 20.7 L81.0 21.8 L80.2 22.9 L79.5 23.7 L78.8 24.0 L78.0 23.7 L77.2 22.9 L76.5 21.8 L75.8 20.7 L75.0 20.1 L75.0 20.1 L74.2 20.6 L73.5 21.5 L72.8 22.5 L72.0 23.1 L71.2 23.4 L70.5 23.1 L69.8 22.5 L69.0 21.5 L68.2 20.6 L67.5 20.1 L67.5 20.1 L66.8 20.7 L66.0 21.8 L65.2 22.9 L64.5 23.7 L63.8 24.0 L63.0 23.7 L62.3 22.9 L61.5 21.8 L60.8 20.7 L60.0 20.1 L60.0 20.1 L59.2 20.6 L58.5 21.5 L57.8 22.5 L57.0 23.1 L56.2 23.4 L55.5 23.1 L54.8 22.5 L54.0 21.5 L53.2 20.6 L52.5 20.1 L52.5 20.1 L51.8 20.7 L51.0 21.8 L50.2 22.9 L49.5 23.7 L48.8 24.0 L48.0 23.7 L47.2 22.9 L46.5 21.8 L45.8 20.7 L45.0 20.1 L45.0 20.1 L44.2 20.6 L43.5 21.5 L42.8 22.5 L42.0 23.1 L41.2 23.4 L40.5 23.1 L39.8 22.5 L39.0 21.5 L38.2 20.6 L37.5 20.1 L37.5 20.1 L36.8 20.7 L36.0 21.8 L35.2 22.9 L34.5 23.7 L33.8 24.0 L33.0 23.7 L32.2 22.9 L31.5 21.8 L30.7 20.7 L30.0 20.1 L30.0 20.1 L29.2 21.0 L28.5 22.6 L27.8 24.2 L27.0 25.3 L26.2 25.8 L25.5 25.3 L24.8 24.2 L24.0 22.6 L23.2 21.0 L22.5 20.1 L22.5 20.1 L21.8 21.0 L21.0 22.6 L20.2 24.2 L19.5 25.3 L18.8 25.8 L18.0 25.3 L17.2 24.2 L16.5 22.6 L15.8 21.0 L15.0 20.1 L15.0 20.1 L14.2 21.0 L13.5 22.6 L12.8 24.2 L12.0 25.3 L11.2 25.8 L10.5 25.3 L9.8 24.2 L9.0 22.6 L8.2 21.0 L7.5 20.1 L7.5 20.1 L6.8 21.0 L6.0 22.6 L5.2 24.2 L4.5 25.3 L3.8 25.8 L3.0 25.3 L2.2 24.2 L1.5 22.6 L0.8 21.0 L0.0 20.1Z" fill="#3797ff"/></svg><span class="n">Organic Pulse Bass 04</span></div>
<div class="clip" style="left:361.85px;top:229.7px;width:239.70px;height:32.1px;background:#215ea2"><div class="h" style="background:#1c4d88"></div><div style="left:0;top:0;width:0.5px;height:100%;background:rgba(0,0,0,0.28)"></div><svg style="left:0;top:0" width="240.0" height="32.1" viewBox="0 0 240.0 32.1"><rect x="8.2" y="13.2" width="1.5" height="1.5" fill="#3797ff"/><rect x="23.2" y="13.2" width="1.5" height="1.5" fill="#3797ff"/><rect x="38.2" y="13.2" width="1.5" height="1.5" fill="#3797ff"/><rect x="53.2" y="13.2" width="1.5" height="1.5" fill="#3797ff"/><rect x="68.2" y="13.2" width="1.5" height="1.5" fill="#3797ff"/><rect x="83.2" y="13.2" width="1.5" height="1.5" fill="#3797ff"/><rect x="98.2" y="13.2" width="1.5" height="1.5" fill="#3797ff"/><rect x="113.2" y="13.2" width="1.5" height="1.5" fill="#3797ff"/><rect x="128.2" y="13.2" width="1.5" height="1.5" fill="#3797ff"/><rect x="143.2" y="13.2" width="1.5" height="1.5" fill="#3797ff"/><rect x="158.2" y="13.2" width="1.5" height="1.5" fill="#3797ff"/><rect x="173.2" y="13.2" width="1.5" height="1.5" fill="#3797ff"/><rect x="188.2" y="13.2" width="1.5" height="1.5" fill="#3797ff"/><rect x="203.2" y="13.2" width="1.5" height="1.5" fill="#3797ff"/><rect x="218.2" y="13.2" width="1.5" height="1.5" fill="#3797ff"/><rect x="233.2" y="13.2" width="1.5" height="1.5" fill="#3797ff"/><rect x="248.2" y="13.2" width="1.5" height="1.5" fill="#3797ff"/><rect x="0.8" y="23.2" width="1.5" height="1.5" fill="#3797ff"/><rect x="8.3" y="23.2" width="1.5" height="1.5" fill="#3797ff"/><rect x="15.8" y="23.2" width="1.5" height="1.5" fill="#3797ff"/><rect x="23.3" y="23.2" width="1.5" height="1.5" fill="#3797ff"/><rect x="30.8" y="23.2" width="1.5" height="1.5" fill="#3797ff"/><rect x="38.3" y="23.2" width="1.5" height="1.5" fill="#3797ff"/><rect x="45.8" y="23.2" width="1.5" height="1.5" fill="#3797ff"/><rect x="53.3" y="23.2" width="1.5" height="1.5" fill="#3797ff"/><rect x="60.8" y="23.2" width="1.5" height="1.5" fill="#3797ff"/><rect x="68.3" y="23.2" width="1.5" height="1.5" fill="#3797ff"/><rect x="75.8" y="23.2" width="1.5" height="1.5" fill="#3797ff"/><rect x="83.3" y="23.2" width="1.5" height="1.5" fill="#3797ff"/><rect x="90.8" y="23.2" width="1.5" height="1.5" fill="#3797ff"/><rect x="98.3" y="23.2" width="1.5" height="1.5" fill="#3797ff"/><rect x="105.8" y="23.2" width="1.5" height="1.5" fill="#3797ff"/><rect x="113.3" y="23.2" width="1.5" height="1.5" fill="#3797ff"/><rect x="120.8" y="23.2" width="1.5" height="1.5" fill="#3797ff"/><rect x="128.3" y="23.2" width="1.5" height="1.5" fill="#3797ff"/><rect x="135.8" y="23.2" width="1.5" height="1.5" fill="#3797ff"/><rect x="143.3" y="23.2" width="1.5" height="1.5" fill="#3797ff"/><rect x="150.8" y="23.2" width="1.5" height="1.5" fill="#3797ff"/><rect x="158.3" y="23.2" width="1.5" height="1.5" fill="#3797ff"/><rect x="165.8" y="23.2" width="1.5" height="1.5" fill="#3797ff"/><rect x="173.3" y="23.2" width="1.5" height="1.5" fill="#3797ff"/><rect x="180.8" y="23.2" width="1.5" height="1.5" fill="#3797ff"/><rect x="188.3" y="23.2" width="1.5" height="1.5" fill="#3797ff"/><rect x="195.8" y="23.2" width="1.5" height="1.5" fill="#3797ff"/><rect x="203.3" y="23.2" width="1.5" height="1.5" fill="#3797ff"/><rect x="210.8" y="23.2" width="1.5" height="1.5" fill="#3797ff"/><rect x="218.3" y="23.2" width="1.5" height="1.5" fill="#3797ff"/><rect x="225.8" y="23.2" width="1.5" height="1.5" fill="#3797ff"/><rect x="233.3" y="23.2" width="1.5" height="1.5" fill="#3797ff"/><rect x="240.8" y="23.2" width="1.5" height="1.5" fill="#3797ff"/></svg><span class="n">Pads</span></div>
<div class="clip" style="left:601.85px;top:229.7px;width:198.00px;height:32.1px;background:#215ea2"><div class="h" style="background:#1c4d88"></div><div style="left:0;top:0;width:0.5px;height:100%;background:rgba(0,0,0,0.28)"></div><svg style="left:0;top:0" width="198.3" height="32.1" viewBox="0 0 198.3 32.1"><rect x="0.8" y="18.1" width="1.4" height="1.3" fill="#3797ff" opacity="0.95"/><rect x="8.3" y="18.1" width="1.4" height="1.3" fill="#3797ff" opacity="0.95"/><rect x="15.8" y="18.1" width="1.4" height="1.3" fill="#3797ff" opacity="0.95"/><rect x="23.3" y="18.1" width="1.4" height="1.3" fill="#3797ff" opacity="0.95"/><rect x="30.8" y="18.1" width="1.4" height="1.3" fill="#3797ff" opacity="0.95"/><rect x="38.3" y="18.1" width="1.4" height="1.3" fill="#3797ff" opacity="0.95"/><rect x="45.8" y="18.1" width="1.4" height="1.3" fill="#3797ff" opacity="0.95"/><rect x="53.3" y="18.1" width="1.4" height="1.3" fill="#3797ff" opacity="0.95"/><rect x="55.5" y="18.1" width="1.4" height="1.3" fill="#3797ff" opacity="0.9"/><rect x="57.9" y="18.1" width="1.4" height="1.3" fill="#3797ff" opacity="0.9"/><rect x="60.8" y="18.1" width="1.4" height="1.3" fill="#3797ff" opacity="0.95"/><rect x="68.3" y="18.1" width="1.4" height="1.3" fill="#3797ff" opacity="0.95"/><rect x="75.8" y="18.1" width="1.4" height="1.3" fill="#3797ff" opacity="0.95"/><rect x="83.3" y="18.1" width="1.4" height="1.3" fill="#3797ff" opacity="0.95"/><rect x="90.8" y="18.1" width="1.4" height="1.3" fill="#3797ff" opacity="0.95"/><rect x="98.3" y="18.1" width="1.4" height="1.3" fill="#3797ff" opacity="0.95"/><rect x="105.8" y="18.1" width="1.4" height="1.3" fill="#3797ff" opacity="0.95"/><rect x="113.3" y="18.1" width="1.4" height="1.3" fill="#3797ff" opacity="0.95"/><rect x="115.5" y="18.1" width="1.4" height="1.3" fill="#3797ff" opacity="0.9"/><rect x="117.9" y="18.1" width="1.4" height="1.3" fill="#3797ff" opacity="0.9"/><rect x="120.8" y="18.1" width="1.4" height="1.3" fill="#3797ff" opacity="0.95"/><rect x="128.3" y="18.1" width="1.4" height="1.3" fill="#3797ff" opacity="0.95"/><rect x="135.8" y="18.1" width="1.4" height="1.3" fill="#3797ff" opacity="0.95"/><rect x="143.3" y="18.1" width="1.4" height="1.3" fill="#3797ff" opacity="0.95"/><rect x="150.8" y="18.1" width="1.4" height="1.3" fill="#3797ff" opacity="0.95"/><rect x="158.3" y="18.1" width="1.4" height="1.3" fill="#3797ff" opacity="0.95"/><rect x="165.8" y="18.1" width="1.4" height="1.3" fill="#3797ff" opacity="0.95"/><rect x="173.3" y="18.1" width="1.4" height="1.3" fill="#3797ff" opacity="0.95"/><rect x="175.5" y="18.1" width="1.4" height="1.3" fill="#3797ff" opacity="0.9"/><rect x="177.9" y="18.1" width="1.4" height="1.3" fill="#3797ff" opacity="0.9"/><rect x="180.8" y="18.1" width="1.4" height="1.3" fill="#3797ff" opacity="0.95"/><rect x="188.3" y="18.1" width="1.4" height="1.3" fill="#3797ff" opacity="0.95"/><rect x="195.8" y="18.1" width="1.4" height="1.3" fill="#3797ff" opacity="0.95"/><rect x="203.3" y="18.1" width="1.4" height="1.3" fill="#3797ff" opacity="0.95"/><rect x="210.8" y="18.1" width="1.4" height="1.3" fill="#3797ff" opacity="0.95"/><rect x="218.3" y="18.1" width="1.4" height="1.3" fill="#3797ff" opacity="0.95"/><rect x="225.8" y="18.1" width="1.4" height="1.3" fill="#3797ff" opacity="0.95"/><rect x="233.3" y="18.1" width="1.4" height="1.3" fill="#3797ff" opacity="0.95"/><rect x="235.5" y="18.1" width="1.4" height="1.3" fill="#3797ff" opacity="0.9"/><rect x="237.9" y="18.1" width="1.4" height="1.3" fill="#3797ff" opacity="0.9"/><rect x="240.8" y="18.1" width="1.4" height="1.3" fill="#3797ff" opacity="0.95"/></svg><span class="n">Acoustic Grand Piano</span></div>
<div class="clip" style="left:601.85px;top:263.9px;width:119.70px;height:32.1px;background:#6f12a3"><div class="h" style="background:#5b0e85"></div><div style="left:0;top:0;width:0.5px;height:100%;background:rgba(0,0,0,0.28)"></div><svg style="left:0;top:0" width="120.0" height="32.1" viewBox="0 0 120.0 32.1"><rect x="0" y="18.9" width="120.0" height="1" fill="#bb45f2" opacity="0.8"/><rect x="1.5" y="17.5" width="0.8" height="3.8" fill="#bb45f2" opacity="0.9"/><rect x="4.5" y="18.4" width="0.8" height="2.0" fill="#bb45f2" opacity="0.9"/><rect x="8.3" y="18.4" width="0.8" height="2.0" fill="#bb45f2" opacity="0.9"/><rect x="12.1" y="18.2" width="0.8" height="2.4" fill="#bb45f2" opacity="0.9"/><rect x="14.0" y="17.2" width="0.8" height="4.4" fill="#bb45f2" opacity="0.9"/><rect x="17.8" y="17.5" width="0.8" height="3.8" fill="#bb45f2" opacity="0.9"/><rect x="19.7" y="18.2" width="0.8" height="2.4" fill="#bb45f2" opacity="0.9"/><rect x="22.7" y="17.5" width="0.8" height="3.8" fill="#bb45f2" opacity="0.9"/><rect x="26.5" y="17.2" width="0.8" height="4.4" fill="#bb45f2" opacity="0.9"/><rect x="30.3" y="17.5" width="0.8" height="3.8" fill="#bb45f2" opacity="0.9"/><rect x="33.3" y="18.2" width="0.8" height="2.4" fill="#bb45f2" opacity="0.9"/><rect x="37.1" y="17.2" width="0.8" height="4.4" fill="#bb45f2" opacity="0.9"/><rect x="39.5" y="18.4" width="0.8" height="2.0" fill="#bb45f2" opacity="0.9"/><rect x="41.4" y="16.8" width="0.8" height="5.2" fill="#bb45f2" opacity="0.9"/><rect x="43.3" y="17.7" width="0.8" height="3.4" fill="#bb45f2" opacity="0.9"/><rect x="46.3" y="17.7" width="0.8" height="3.4" fill="#bb45f2" opacity="0.9"/><rect x="48.7" y="16.8" width="0.8" height="5.2" fill="#bb45f2" opacity="0.9"/><rect x="52.5" y="16.8" width="0.8" height="5.2" fill="#bb45f2" opacity="0.9"/><rect x="54.4" y="17.7" width="0.8" height="3.4" fill="#bb45f2" opacity="0.9"/><rect x="58.2" y="16.8" width="0.8" height="5.2" fill="#bb45f2" opacity="0.9"/><rect x="61.2" y="17.7" width="0.8" height="3.4" fill="#bb45f2" opacity="0.9"/><rect x="65.0" y="18.4" width="0.8" height="2.0" fill="#bb45f2" opacity="0.9"/><rect x="68.0" y="17.5" width="0.8" height="3.8" fill="#bb45f2" opacity="0.9"/><rect x="71.8" y="17.2" width="0.8" height="4.4" fill="#bb45f2" opacity="0.9"/><rect x="75.6" y="17.7" width="0.8" height="3.4" fill="#bb45f2" opacity="0.9"/><rect x="78.0" y="18.2" width="0.8" height="2.4" fill="#bb45f2" opacity="0.9"/><rect x="80.4" y="17.7" width="0.8" height="3.4" fill="#bb45f2" opacity="0.9"/><rect x="82.8" y="17.5" width="0.8" height="3.8" fill="#bb45f2" opacity="0.9"/><rect x="85.2" y="18.2" width="0.8" height="2.4" fill="#bb45f2" opacity="0.9"/><rect x="89.0" y="18.4" width="0.8" height="2.0" fill="#bb45f2" opacity="0.9"/><rect x="91.4" y="17.2" width="0.8" height="4.4" fill="#bb45f2" opacity="0.9"/><rect x="94.4" y="18.2" width="0.8" height="2.4" fill="#bb45f2" opacity="0.9"/><rect x="96.8" y="16.8" width="0.8" height="5.2" fill="#bb45f2" opacity="0.9"/><rect x="99.8" y="18.4" width="0.8" height="2.0" fill="#bb45f2" opacity="0.9"/><rect x="102.8" y="17.7" width="0.8" height="3.4" fill="#bb45f2" opacity="0.9"/><rect x="104.7" y="16.8" width="0.8" height="5.2" fill="#bb45f2" opacity="0.9"/><rect x="108.5" y="16.8" width="0.8" height="5.2" fill="#bb45f2" opacity="0.9"/><rect x="112.3" y="16.8" width="0.8" height="5.2" fill="#bb45f2" opacity="0.9"/><rect x="114.2" y="16.8" width="0.8" height="5.2" fill="#bb45f2" opacity="0.9"/><rect x="118.0" y="18.2" width="0.8" height="2.4" fill="#bb45f2" opacity="0.9"/></svg><span class="n">EDM Top Loop Combo 05</span></div>
<div class="clip" style="left:721.85px;top:263.9px;width:78.00px;height:32.1px;background:#6f12a3"><div class="h" style="background:#5b0e85"></div><div style="left:0;top:0;width:0.5px;height:100%;background:rgba(0,0,0,0.28)"></div><svg style="left:0;top:0" width="78.3" height="32.1" viewBox="0 0 78.3 32.1"><rect x="0" y="18.9" width="78.3" height="1" fill="#bb45f2" opacity="0.8"/><rect x="1.5" y="18.2" width="0.8" height="2.4" fill="#bb45f2" opacity="0.9"/><rect x="3.9" y="16.8" width="0.8" height="5.2" fill="#bb45f2" opacity="0.9"/><rect x="6.3" y="18.2" width="0.8" height="2.4" fill="#bb45f2" opacity="0.9"/><rect x="9.3" y="18.4" width="0.8" height="2.0" fill="#bb45f2" opacity="0.9"/><rect x="11.2" y="18.2" width="0.8" height="2.4" fill="#bb45f2" opacity="0.9"/><rect x="13.1" y="18.4" width="0.8" height="2.0" fill="#bb45f2" opacity="0.9"/><rect x="15.5" y="18.4" width="0.8" height="2.0" fill="#bb45f2" opacity="0.9"/><rect x="17.4" y="17.2" width="0.8" height="4.4" fill="#bb45f2" opacity="0.9"/><rect x="19.3" y="18.2" width="0.8" height="2.4" fill="#bb45f2" opacity="0.9"/><rect x="21.7" y="18.4" width="0.8" height="2.0" fill="#bb45f2" opacity="0.9"/><rect x="25.5" y="17.7" width="0.8" height="3.4" fill="#bb45f2" opacity="0.9"/><rect x="28.5" y="17.2" width="0.8" height="4.4" fill="#bb45f2" opacity="0.9"/><rect x="31.5" y="16.8" width="0.8" height="5.2" fill="#bb45f2" opacity="0.9"/><rect x="33.4" y="18.2" width="0.8" height="2.4" fill="#bb45f2" opacity="0.9"/><rect x="37.2" y="16.8" width="0.8" height="5.2" fill="#bb45f2" opacity="0.9"/><rect x="41.0" y="16.8" width="0.8" height="5.2" fill="#bb45f2" opacity="0.9"/><rect x="44.0" y="18.2" width="0.8" height="2.4" fill="#bb45f2" opacity="0.9"/><rect x="46.4" y="18.2" width="0.8" height="2.4" fill="#bb45f2" opacity="0.9"/><rect x="49.4" y="17.5" width="0.8" height="3.8" fill="#bb45f2" opacity="0.9"/><rect x="52.4" y="16.8" width="0.8" height="5.2" fill="#bb45f2" opacity="0.9"/><rect x="54.8" y="18.4" width="0.8" height="2.0" fill="#bb45f2" opacity="0.9"/><rect x="56.7" y="17.7" width="0.8" height="3.4" fill="#bb45f2" opacity="0.9"/><rect x="59.7" y="17.7" width="0.8" height="3.4" fill="#bb45f2" opacity="0.9"/><rect x="61.6" y="18.4" width="0.8" height="2.0" fill="#bb45f2" opacity="0.9"/><rect x="64.6" y="17.5" width="0.8" height="3.8" fill="#bb45f2" opacity="0.9"/><rect x="66.5" y="17.5" width="0.8" height="3.8" fill="#bb45f2" opacity="0.9"/><rect x="69.5" y="18.4" width="0.8" height="2.0" fill="#bb45f2" opacity="0.9"/><rect x="72.5" y="17.7" width="0.8" height="3.4" fill="#bb45f2" opacity="0.9"/><rect x="75.5" y="17.7" width="0.8" height="3.4" fill="#bb45f2" opacity="0.9"/><rect x="78.5" y="17.5" width="0.8" height="3.8" fill="#bb45f2" opacity="0.9"/><rect x="80.9" y="18.4" width="0.8" height="2.0" fill="#bb45f2" opacity="0.9"/><rect x="83.3" y="17.7" width="0.8" height="3.4" fill="#bb45f2" opacity="0.9"/><rect x="87.1" y="17.5" width="0.8" height="3.8" fill="#bb45f2" opacity="0.9"/><rect x="89.5" y="17.7" width="0.8" height="3.4" fill="#bb45f2" opacity="0.9"/><rect x="93.3" y="17.2" width="0.8" height="4.4" fill="#bb45f2" opacity="0.9"/><rect x="95.2" y="18.2" width="0.8" height="2.4" fill="#bb45f2" opacity="0.9"/><rect x="98.2" y="16.8" width="0.8" height="5.2" fill="#bb45f2" opacity="0.9"/><rect x="101.2" y="17.7" width="0.8" height="3.4" fill="#bb45f2" opacity="0.9"/><rect x="104.2" y="16.8" width="0.8" height="5.2" fill="#bb45f2" opacity="0.9"/><rect x="107.2" y="17.2" width="0.8" height="4.4" fill="#bb45f2" opacity="0.9"/><rect x="109.1" y="17.7" width="0.8" height="3.4" fill="#bb45f2" opacity="0.9"/><rect x="111.0" y="17.7" width="0.8" height="3.4" fill="#bb45f2" opacity="0.9"/><rect x="114.8" y="17.7" width="0.8" height="3.4" fill="#bb45f2" opacity="0.9"/><rect x="117.8" y="17.7" width="0.8" height="3.4" fill="#bb45f2" opacity="0.9"/></svg><span class="n">EDM Top Loop Combo 05</span></div>
<div class="clip" style="left:331.85px;top:298.1px;width:29.70px;height:32.1px;background:#215ea2"><div class="h" style="background:#1c4d88"></div><div style="left:0;top:0;width:0.5px;height:100%;background:rgba(0,0,0,0.28)"></div><svg style="left:0;top:0" width="30.0" height="32.1" viewBox="0 0 30.0 32.1"><path d="M0.0 19.0 L0.8 19.0 L1.5 19.0 L2.2 19.0 L3.0 19.0 L3.8 19.0 L4.5 19.0 L5.2 19.0 L6.0 19.0 L6.8 19.0 L7.5 19.0 L8.2 19.0 L9.0 19.0 L9.8 19.0 L10.5 19.0 L11.2 19.0 L12.0 19.0 L12.8 19.0 L13.5 19.0 L14.2 19.0 L15.0 19.0 L15.8 18.9 L16.5 18.9 L17.2 18.9 L18.0 18.8 L18.8 18.8 L19.5 18.7 L20.2 18.6 L21.0 18.5 L21.8 18.4 L22.5 18.3 L23.2 18.1 L24.0 17.8 L24.8 17.6 L25.5 17.2 L26.2 16.8 L27.0 16.4 L27.8 15.8 L28.5 15.2 L29.2 14.4 L30.0 13.5 L30.0 25.2 L29.2 24.3 L28.5 23.5 L27.8 22.9 L27.0 22.3 L26.2 21.9 L25.5 21.5 L24.8 21.1 L24.0 20.9 L23.2 20.6 L22.5 20.4 L21.8 20.3 L21.0 20.2 L20.2 20.1 L19.5 20.0 L18.8 19.9 L18.0 19.9 L17.2 19.8 L16.5 19.8 L15.8 19.8 L15.0 19.7 L14.2 19.7 L13.5 19.7 L12.8 19.7 L12.0 19.7 L11.2 19.7 L10.5 19.7 L9.8 19.7 L9.0 19.7 L8.2 19.7 L7.5 19.7 L6.8 19.7 L6.0 19.7 L5.2 19.7 L4.5 19.7 L3.8 19.7 L3.0 19.7 L2.2 19.7 L1.5 19.7 L0.8 19.7 L0.0 19.7Z" fill="#3797ff"/></svg><span class="n">IGH Kit ...</span></div>
<div class="clip" style="left:721.85px;top:298.1px;width:78.00px;height:32.1px;background:#215ea2"><div class="h" style="background:#1c4d88"></div><div style="left:0;top:0;width:0.5px;height:100%;background:rgba(0,0,0,0.28)"></div><svg style="left:0;top:0" width="78.3" height="32.1" viewBox="0 0 78.3 32.1"><rect x="0" y="19.0" width="78.3" height="0.8" fill="#3797ff"/><rect x="38" y="18.6" width="40.3" height="1.6" fill="#3797ff"/></svg><span class="n">Speeding Riser</span></div>
<div class="clip" style="left:121.85px;top:332.3px;width:89.70px;height:32.1px;background:#a87b1f"><div class="h" style="background:#8a6516"></div><div style="left:0;top:0;width:0.5px;height:100%;background:rgba(0,0,0,0.28)"></div><svg style="left:0;top:0" width="90.0" height="32.1" viewBox="0 0 90.0 32.1"><rect x="0" y="18.6" width="90.0" height="1.6" fill="#ffc02e"/></svg><span class="n">Sampler</span></div>
<div class="clip" style="left:601.85px;top:332.3px;width:119.70px;height:32.1px;background:#a87b1f"><div class="h" style="background:#8a6516"></div><div style="left:0;top:0;width:0.5px;height:100%;background:rgba(0,0,0,0.28)"></div><svg style="left:0;top:0" width="120.0" height="32.1" viewBox="0 0 120.0 32.1"><rect x="0" y="18.6" width="120.0" height="1.6" fill="#ffc02e"/></svg><span class="n">Sampler</span></div>
<div class="clip" style="left:601.85px;top:366.5px;width:198.00px;height:32.1px;background:#8c3e15"><div class="h" style="background:#7c3512"></div><div style="left:0;top:0;width:0.5px;height:100%;background:rgba(0,0,0,0.28)"></div><svg style="left:0;top:0" width="198.3" height="32.1" viewBox="0 0 198.3 32.1"><path d="M0.0 18.7 L0.5 18.5 L1.0 18.4 L1.5 18.1 L2.0 17.6 L2.5 17.6 L3.0 17.1 L3.5 16.5 L4.0 16.6 L4.5 15.9 L5.0 15.2 L5.5 15.2 L6.0 15.5 L6.5 16.2 L7.0 17.6 L7.5 18.7 L7.5 20.0 L7.0 21.1 L6.5 22.5 L6.0 23.2 L5.5 23.5 L5.0 23.5 L4.5 22.8 L4.0 22.1 L3.5 22.2 L3.0 21.6 L2.5 21.1 L2.0 21.1 L1.5 20.6 L1.0 20.3 L0.5 20.2 L0.0 20.0Z" fill="#f86a14"/><path d="M7.5 18.7 L8.0 18.5 L8.5 18.5 L9.0 18.1 L9.5 17.7 L10.0 17.7 L10.5 17.2 L11.0 16.7 L11.5 16.9 L12.0 16.2 L12.5 15.5 L13.0 15.5 L13.5 15.8 L14.0 16.4 L14.5 17.7 L15.0 18.7 L15.0 20.0 L14.5 21.0 L14.0 22.3 L13.5 22.9 L13.0 23.2 L12.5 23.2 L12.0 22.5 L11.5 21.8 L11.0 22.0 L10.5 21.5 L10.0 21.0 L9.5 21.0 L9.0 20.6 L8.5 20.2 L8.0 20.2 L7.5 20.0Z" fill="#f86a14"/><path d="M15.0 18.7 L15.5 18.5 L16.0 18.4 L16.5 18.0 L17.0 17.5 L17.5 17.6 L18.0 17.0 L18.5 16.4 L19.0 16.5 L19.5 15.8 L20.0 15.0 L20.5 15.0 L21.0 15.4 L21.5 16.1 L22.0 17.6 L22.5 18.7 L22.5 20.0 L22.0 21.1 L21.5 22.6 L21.0 23.3 L20.5 23.7 L20.0 23.7 L19.5 22.9 L19.0 22.2 L18.5 22.3 L18.0 21.7 L17.5 21.1 L17.0 21.2 L16.5 20.7 L16.0 20.3 L15.5 20.2 L15.0 20.0Z" fill="#f86a14"/><path d="M22.5 18.7 L23.0 18.5 L23.5 18.4 L24.0 18.1 L24.5 17.7 L25.0 17.7 L25.5 17.2 L26.0 16.6 L26.5 16.8 L27.0 16.1 L27.5 15.4 L28.0 15.4 L28.5 15.7 L29.0 16.3 L29.5 17.7 L30.0 18.7 L30.0 20.0 L29.5 21.0 L29.0 22.4 L28.5 23.0 L28.0 23.3 L27.5 23.3 L27.0 22.6 L26.5 21.9 L26.0 22.1 L25.5 21.5 L25.0 21.0 L24.5 21.0 L24.0 20.6 L23.5 20.3 L23.0 20.2 L22.5 20.0Z" fill="#f86a14"/><path d="M30.0 18.7 L30.5 18.5 L31.0 18.4 L31.5 18.1 L32.0 17.6 L32.5 17.6 L33.0 17.1 L33.5 16.5 L34.0 16.6 L34.5 15.9 L35.0 15.2 L35.5 15.2 L36.0 15.5 L36.5 16.2 L37.0 17.6 L37.5 18.7 L37.5 20.0 L37.0 21.1 L36.5 22.5 L36.0 23.2 L35.5 23.5 L35.0 23.5 L34.5 22.8 L34.0 22.1 L33.5 22.2 L33.0 21.6 L32.5 21.1 L32.0 21.1 L31.5 20.6 L31.0 20.3 L30.5 20.2 L30.0 20.0Z" fill="#cf5a1c"/><path d="M37.5 18.7 L38.0 18.5 L38.5 18.5 L39.0 18.1 L39.5 17.7 L40.0 17.7 L40.5 17.2 L41.0 16.7 L41.5 16.9 L42.0 16.2 L42.5 15.5 L43.0 15.5 L43.5 15.8 L44.0 16.4 L44.5 17.7 L45.0 18.7 L45.0 20.0 L44.5 21.0 L44.0 22.3 L43.5 22.9 L43.0 23.2 L42.5 23.2 L42.0 22.5 L41.5 21.8 L41.0 22.0 L40.5 21.5 L40.0 21.0 L39.5 21.0 L39.0 20.6 L38.5 20.2 L38.0 20.2 L37.5 20.0Z" fill="#cf5a1c"/><path d="M45.0 18.7 L45.5 18.5 L46.0 18.4 L46.5 18.0 L47.0 17.5 L47.5 17.6 L48.0 17.0 L48.5 16.4 L49.0 16.5 L49.5 15.8 L50.0 15.0 L50.5 15.0 L51.0 15.4 L51.5 16.1 L52.0 17.6 L52.5 18.7 L52.5 20.0 L52.0 21.1 L51.5 22.6 L51.0 23.3 L50.5 23.7 L50.0 23.7 L49.5 22.9 L49.0 22.2 L48.5 22.3 L48.0 21.7 L47.5 21.1 L47.0 21.2 L46.5 20.7 L46.0 20.3 L45.5 20.2 L45.0 20.0Z" fill="#cf5a1c"/><path d="M52.5 18.7 L53.0 18.5 L53.5 18.4 L54.0 18.1 L54.5 17.7 L55.0 17.7 L55.5 17.2 L56.0 16.6 L56.5 16.8 L57.0 16.1 L57.5 15.4 L58.0 15.4 L58.5 15.7 L59.0 16.3 L59.5 17.7 L60.0 18.7 L60.0 20.0 L59.5 21.0 L59.0 22.4 L58.5 23.0 L58.0 23.3 L57.5 23.3 L57.0 22.6 L56.5 21.9 L56.0 22.1 L55.5 21.5 L55.0 21.0 L54.5 21.0 L54.0 20.6 L53.5 20.3 L53.0 20.2 L52.5 20.0Z" fill="#cf5a1c"/><path d="M60.0 18.7 L60.5 18.5 L61.0 18.4 L61.5 18.1 L62.0 17.6 L62.5 17.6 L63.0 17.1 L63.5 16.5 L64.0 16.6 L64.5 15.9 L65.0 15.2 L65.5 15.2 L66.0 15.5 L66.5 16.2 L67.0 17.6 L67.5 18.7 L67.5 20.0 L67.0 21.1 L66.5 22.5 L66.0 23.2 L65.5 23.5 L65.0 23.5 L64.5 22.8 L64.0 22.1 L63.5 22.2 L63.0 21.6 L62.5 21.1 L62.0 21.1 L61.5 20.6 L61.0 20.3 L60.5 20.2 L60.0 20.0Z" fill="#cf5a1c"/><path d="M67.5 18.7 L68.0 18.5 L68.5 18.5 L69.0 18.1 L69.5 17.7 L70.0 17.7 L70.5 17.2 L71.0 16.7 L71.5 16.9 L72.0 16.2 L72.5 15.5 L73.0 15.5 L73.5 15.8 L74.0 16.4 L74.5 17.7 L75.0 18.7 L75.0 20.0 L74.5 21.0 L74.0 22.3 L73.5 22.9 L73.0 23.2 L72.5 23.2 L72.0 22.5 L71.5 21.8 L71.0 22.0 L70.5 21.5 L70.0 21.0 L69.5 21.0 L69.0 20.6 L68.5 20.2 L68.0 20.2 L67.5 20.0Z" fill="#cf5a1c"/><path d="M75.0 18.7 L75.5 18.5 L76.0 18.4 L76.5 18.0 L77.0 17.5 L77.5 17.6 L78.0 17.0 L78.5 16.4 L79.0 16.5 L79.5 15.8 L80.0 15.0 L80.5 15.0 L81.0 15.4 L81.5 16.1 L82.0 17.6 L82.5 18.7 L82.5 20.0 L82.0 21.1 L81.5 22.6 L81.0 23.3 L80.5 23.7 L80.0 23.7 L79.5 22.9 L79.0 22.2 L78.5 22.3 L78.0 21.7 L77.5 21.1 L77.0 21.2 L76.5 20.7 L76.0 20.3 L75.5 20.2 L75.0 20.0Z" fill="#cf5a1c"/><path d="M82.5 18.7 L83.0 18.5 L83.5 18.4 L84.0 18.1 L84.5 17.7 L85.0 17.7 L85.5 17.2 L86.0 16.6 L86.5 16.8 L87.0 16.1 L87.5 15.4 L88.0 15.4 L88.5 15.7 L89.0 16.3 L89.5 17.7 L90.0 18.7 L90.0 20.0 L89.5 21.0 L89.0 22.4 L88.5 23.0 L88.0 23.3 L87.5 23.3 L87.0 22.6 L86.5 21.9 L86.0 22.1 L85.5 21.5 L85.0 21.0 L84.5 21.0 L84.0 20.6 L83.5 20.3 L83.0 20.2 L82.5 20.0Z" fill="#cf5a1c"/><path d="M90.0 18.7 L90.5 18.5 L91.0 18.4 L91.5 18.1 L92.0 17.6 L92.5 17.6 L93.0 17.1 L93.5 16.5 L94.0 16.6 L94.5 15.9 L95.0 15.2 L95.5 15.2 L96.0 15.5 L96.5 16.2 L97.0 17.6 L97.5 18.7 L97.5 20.0 L97.0 21.1 L96.5 22.5 L96.0 23.2 L95.5 23.5 L95.0 23.5 L94.5 22.8 L94.0 22.1 L93.5 22.2 L93.0 21.6 L92.5 21.1 L92.0 21.1 L91.5 20.6 L91.0 20.3 L90.5 20.2 L90.0 20.0Z" fill="#cf5a1c"/><path d="M97.5 18.7 L98.0 18.5 L98.5 18.5 L99.0 18.1 L99.5 17.7 L100.0 17.7 L100.5 17.2 L101.0 16.7 L101.5 16.9 L102.0 16.2 L102.5 15.5 L103.0 15.5 L103.5 15.8 L104.0 16.4 L104.5 17.7 L105.0 18.7 L105.0 20.0 L104.5 21.0 L104.0 22.3 L103.5 22.9 L103.0 23.2 L102.5 23.2 L102.0 22.5 L101.5 21.8 L101.0 22.0 L100.5 21.5 L100.0 21.0 L99.5 21.0 L99.0 20.6 L98.5 20.2 L98.0 20.2 L97.5 20.0Z" fill="#cf5a1c"/><path d="M105.0 18.7 L105.5 18.5 L106.0 18.4 L106.5 18.0 L107.0 17.5 L107.5 17.6 L108.0 17.0 L108.5 16.4 L109.0 16.5 L109.5 15.8 L110.0 15.0 L110.5 15.0 L111.0 15.4 L111.5 16.1 L112.0 17.6 L112.5 18.7 L112.5 20.0 L112.0 21.1 L111.5 22.6 L111.0 23.3 L110.5 23.7 L110.0 23.7 L109.5 22.9 L109.0 22.2 L108.5 22.3 L108.0 21.7 L107.5 21.1 L107.0 21.2 L106.5 20.7 L106.0 20.3 L105.5 20.2 L105.0 20.0Z" fill="#cf5a1c"/><path d="M112.5 18.7 L113.0 18.5 L113.5 18.4 L114.0 18.1 L114.5 17.7 L115.0 17.7 L115.5 17.2 L116.0 16.6 L116.5 16.8 L117.0 16.1 L117.5 15.4 L118.0 15.4 L118.5 15.7 L119.0 16.3 L119.5 17.7 L120.0 18.7 L120.0 20.0 L119.5 21.0 L119.0 22.4 L118.5 23.0 L118.0 23.3 L117.5 23.3 L117.0 22.6 L116.5 21.9 L116.0 22.1 L115.5 21.5 L115.0 21.0 L114.5 21.0 L114.0 20.6 L113.5 20.3 L113.0 20.2 L112.5 20.0Z" fill="#cf5a1c"/><path d="M120.0 18.7 L120.5 18.5 L121.0 18.4 L121.5 18.1 L122.0 17.6 L122.5 17.6 L123.0 17.1 L123.5 16.5 L124.0 16.6 L124.5 15.9 L125.0 15.2 L125.5 15.2 L126.0 15.5 L126.5 16.2 L127.0 17.6 L127.5 18.7 L127.5 20.0 L127.0 21.1 L126.5 22.5 L126.0 23.2 L125.5 23.5 L125.0 23.5 L124.5 22.8 L124.0 22.1 L123.5 22.2 L123.0 21.6 L122.5 21.1 L122.0 21.1 L121.5 20.6 L121.0 20.3 L120.5 20.2 L120.0 20.0Z" fill="#cf5a1c"/><path d="M127.5 18.7 L128.0 18.5 L128.5 18.5 L129.0 18.1 L129.5 17.7 L130.0 17.7 L130.5 17.2 L131.0 16.7 L131.5 16.9 L132.0 16.2 L132.5 15.5 L133.0 15.5 L133.5 15.8 L134.0 16.4 L134.5 17.7 L135.0 18.7 L135.0 20.0 L134.5 21.0 L134.0 22.3 L133.5 22.9 L133.0 23.2 L132.5 23.2 L132.0 22.5 L131.5 21.8 L131.0 22.0 L130.5 21.5 L130.0 21.0 L129.5 21.0 L129.0 20.6 L128.5 20.2 L128.0 20.2 L127.5 20.0Z" fill="#cf5a1c"/><path d="M135.0 18.7 L135.5 18.5 L136.0 18.4 L136.5 18.0 L137.0 17.5 L137.5 17.6 L138.0 17.0 L138.5 16.4 L139.0 16.5 L139.5 15.8 L140.0 15.0 L140.5 15.0 L141.0 15.4 L141.5 16.1 L142.0 17.6 L142.5 18.7 L142.5 20.0 L142.0 21.1 L141.5 22.6 L141.0 23.3 L140.5 23.7 L140.0 23.7 L139.5 22.9 L139.0 22.2 L138.5 22.3 L138.0 21.7 L137.5 21.1 L137.0 21.2 L136.5 20.7 L136.0 20.3 L135.5 20.2 L135.0 20.0Z" fill="#cf5a1c"/><path d="M142.5 18.7 L143.0 18.5 L143.5 18.4 L144.0 18.1 L144.5 17.7 L145.0 17.7 L145.5 17.2 L146.0 16.6 L146.5 16.8 L147.0 16.1 L147.5 15.4 L148.0 15.4 L148.5 15.7 L149.0 16.3 L149.5 17.7 L150.0 18.7 L150.0 20.0 L149.5 21.0 L149.0 22.4 L148.5 23.0 L148.0 23.3 L147.5 23.3 L147.0 22.6 L146.5 21.9 L146.0 22.1 L145.5 21.5 L145.0 21.0 L144.5 21.0 L144.0 20.6 L143.5 20.3 L143.0 20.2 L142.5 20.0Z" fill="#cf5a1c"/><path d="M150.0 18.7 L150.5 18.5 L151.0 18.4 L151.5 18.1 L152.0 17.6 L152.5 17.6 L153.0 17.1 L153.5 16.5 L154.0 16.6 L154.5 15.9 L155.0 15.2 L155.5 15.2 L156.0 15.5 L156.5 16.2 L157.0 17.6 L157.5 18.7 L157.5 20.0 L157.0 21.1 L156.5 22.5 L156.0 23.2 L155.5 23.5 L155.0 23.5 L154.5 22.8 L154.0 22.1 L153.5 22.2 L153.0 21.6 L152.5 21.1 L152.0 21.1 L151.5 20.6 L151.0 20.3 L150.5 20.2 L150.0 20.0Z" fill="#cf5a1c"/><path d="M157.5 18.7 L158.0 18.5 L158.5 18.5 L159.0 18.1 L159.5 17.7 L160.0 17.7 L160.5 17.2 L161.0 16.7 L161.5 16.9 L162.0 16.2 L162.5 15.5 L163.0 15.5 L163.5 15.8 L164.0 16.4 L164.5 17.7 L165.0 18.7 L165.0 20.0 L164.5 21.0 L164.0 22.3 L163.5 22.9 L163.0 23.2 L162.5 23.2 L162.0 22.5 L161.5 21.8 L161.0 22.0 L160.5 21.5 L160.0 21.0 L159.5 21.0 L159.0 20.6 L158.5 20.2 L158.0 20.2 L157.5 20.0Z" fill="#cf5a1c"/><path d="M165.0 18.7 L165.5 18.5 L166.0 18.4 L166.5 18.0 L167.0 17.5 L167.5 17.6 L168.0 17.0 L168.5 16.4 L169.0 16.5 L169.5 15.8 L170.0 15.0 L170.5 15.0 L171.0 15.4 L171.5 16.1 L172.0 17.6 L172.5 18.7 L172.5 20.0 L172.0 21.1 L171.5 22.6 L171.0 23.3 L170.5 23.7 L170.0 23.7 L169.5 22.9 L169.0 22.2 L168.5 22.3 L168.0 21.7 L167.5 21.1 L167.0 21.2 L166.5 20.7 L166.0 20.3 L165.5 20.2 L165.0 20.0Z" fill="#cf5a1c"/><path d="M172.5 18.7 L173.0 18.5 L173.5 18.4 L174.0 18.1 L174.5 17.7 L175.0 17.7 L175.5 17.2 L176.0 16.6 L176.5 16.8 L177.0 16.1 L177.5 15.4 L178.0 15.4 L178.5 15.7 L179.0 16.3 L179.5 17.7 L180.0 18.7 L180.0 20.0 L179.5 21.0 L179.0 22.4 L178.5 23.0 L178.0 23.3 L177.5 23.3 L177.0 22.6 L176.5 21.9 L176.0 22.1 L175.5 21.5 L175.0 21.0 L174.5 21.0 L174.0 20.6 L173.5 20.3 L173.0 20.2 L172.5 20.0Z" fill="#cf5a1c"/><path d="M180.0 18.7 L180.5 18.5 L181.0 18.4 L181.5 18.1 L182.0 17.6 L182.5 17.6 L183.0 17.1 L183.5 16.5 L184.0 16.6 L184.5 15.9 L185.0 15.2 L185.5 15.2 L186.0 15.5 L186.5 16.2 L187.0 17.6 L187.5 18.7 L187.5 20.0 L187.0 21.1 L186.5 22.5 L186.0 23.2 L185.5 23.5 L185.0 23.5 L184.5 22.8 L184.0 22.1 L183.5 22.2 L183.0 21.6 L182.5 21.1 L182.0 21.1 L181.5 20.6 L181.0 20.3 L180.5 20.2 L180.0 20.0Z" fill="#cf5a1c"/><path d="M187.5 18.7 L188.0 18.5 L188.5 18.5 L189.0 18.1 L189.5 17.7 L190.0 17.7 L190.5 17.2 L191.0 16.7 L191.5 16.9 L192.0 16.2 L192.5 15.5 L193.0 15.5 L193.5 15.8 L194.0 16.4 L194.5 17.7 L195.0 18.7 L195.0 20.0 L194.5 21.0 L194.0 22.3 L193.5 22.9 L193.0 23.2 L192.5 23.2 L192.0 22.5 L191.5 21.8 L191.0 22.0 L190.5 21.5 L190.0 21.0 L189.5 21.0 L189.0 20.6 L188.5 20.2 L188.0 20.2 L187.5 20.0Z" fill="#cf5a1c"/><path d="M195.0 18.7 L195.5 18.5 L196.0 18.4 L196.5 18.0 L197.0 17.5 L197.5 17.6 L198.0 17.0 L198.5 16.4 L199.0 16.5 L199.5 15.8 L200.0 15.0 L200.5 15.0 L201.0 15.4 L201.5 16.1 L202.0 17.6 L202.5 18.7 L202.5 20.0 L202.0 21.1 L201.5 22.6 L201.0 23.3 L200.5 23.7 L200.0 23.7 L199.5 22.9 L199.0 22.2 L198.5 22.3 L198.0 21.7 L197.5 21.1 L197.0 21.2 L196.5 20.7 L196.0 20.3 L195.5 20.2 L195.0 20.0Z" fill="#cf5a1c"/><path d="M202.5 18.7 L203.0 18.5 L203.5 18.4 L204.0 18.1 L204.5 17.7 L205.0 17.7 L205.5 17.2 L206.0 16.6 L206.5 16.8 L207.0 16.1 L207.5 15.4 L208.0 15.4 L208.5 15.7 L209.0 16.3 L209.5 17.7 L210.0 18.7 L210.0 20.0 L209.5 21.0 L209.0 22.4 L208.5 23.0 L208.0 23.3 L207.5 23.3 L207.0 22.6 L206.5 21.9 L206.0 22.1 L205.5 21.5 L205.0 21.0 L204.5 21.0 L204.0 20.6 L203.5 20.3 L203.0 20.2 L202.5 20.0Z" fill="#cf5a1c"/><path d="M210.0 18.7 L210.5 18.5 L211.0 18.4 L211.5 18.1 L212.0 17.6 L212.5 17.6 L213.0 17.1 L213.5 16.5 L214.0 16.6 L214.5 15.9 L215.0 15.2 L215.5 15.2 L216.0 15.5 L216.5 16.2 L217.0 17.6 L217.5 18.7 L217.5 20.0 L217.0 21.1 L216.5 22.5 L216.0 23.2 L215.5 23.5 L215.0 23.5 L214.5 22.8 L214.0 22.1 L213.5 22.2 L213.0 21.6 L212.5 21.1 L212.0 21.1 L211.5 20.6 L211.0 20.3 L210.5 20.2 L210.0 20.0Z" fill="#cf5a1c"/><path d="M217.5 18.7 L218.0 18.5 L218.5 18.5 L219.0 18.1 L219.5 17.7 L220.0 17.7 L220.5 17.2 L221.0 16.7 L221.5 16.9 L222.0 16.2 L222.5 15.5 L223.0 15.5 L223.5 15.8 L224.0 16.4 L224.5 17.7 L225.0 18.7 L225.0 20.0 L224.5 21.0 L224.0 22.3 L223.5 22.9 L223.0 23.2 L222.5 23.2 L222.0 22.5 L221.5 21.8 L221.0 22.0 L220.5 21.5 L220.0 21.0 L219.5 21.0 L219.0 20.6 L218.5 20.2 L218.0 20.2 L217.5 20.0Z" fill="#cf5a1c"/><path d="M225.0 18.7 L225.5 18.5 L226.0 18.4 L226.5 18.0 L227.0 17.5 L227.5 17.6 L228.0 17.0 L228.5 16.4 L229.0 16.5 L229.5 15.8 L230.0 15.0 L230.5 15.0 L231.0 15.4 L231.5 16.1 L232.0 17.6 L232.5 18.7 L232.5 20.0 L232.0 21.1 L231.5 22.6 L231.0 23.3 L230.5 23.7 L230.0 23.7 L229.5 22.9 L229.0 22.2 L228.5 22.3 L228.0 21.7 L227.5 21.1 L227.0 21.2 L226.5 20.7 L226.0 20.3 L225.5 20.2 L225.0 20.0Z" fill="#cf5a1c"/><path d="M232.5 18.7 L233.0 18.5 L233.5 18.4 L234.0 18.1 L234.5 17.7 L235.0 17.7 L235.5 17.2 L236.0 16.6 L236.5 16.8 L237.0 16.1 L237.5 15.4 L238.0 15.4 L238.5 15.7 L239.0 16.3 L239.5 17.7 L240.0 18.7 L240.0 20.0 L239.5 21.0 L239.0 22.4 L238.5 23.0 L238.0 23.3 L237.5 23.3 L237.0 22.6 L236.5 21.9 L236.0 22.1 L235.5 21.5 L235.0 21.0 L234.5 21.0 L234.0 20.6 L233.5 20.3 L233.0 20.2 L232.5 20.0Z" fill="#cf5a1c"/><path d="M240.0 18.7 L240.5 18.5 L241.0 18.4 L241.5 18.1 L242.0 17.6 L242.5 17.6 L243.0 17.1 L243.5 16.5 L244.0 16.6 L244.5 15.9 L245.0 15.2 L245.5 15.2 L246.0 15.5 L246.5 16.2 L247.0 17.6 L247.5 18.7 L247.5 20.0 L247.0 21.1 L246.5 22.5 L246.0 23.2 L245.5 23.5 L245.0 23.5 L244.5 22.8 L244.0 22.1 L243.5 22.2 L243.0 21.6 L242.5 21.1 L242.0 21.1 L241.5 20.6 L241.0 20.3 L240.5 20.2 L240.0 20.0Z" fill="#cf5a1c"/><rect x="29.8" y="6.6" width="0.8" height="25.5" fill="#e9bc94"/><rect x="59.8" y="6.6" width="0.8" height="25.5" fill="#e9bc94"/><rect x="89.8" y="6.6" width="0.8" height="25.5" fill="#e9bc94"/><rect x="119.8" y="6.6" width="0.8" height="25.5" fill="#e9bc94"/><rect x="149.8" y="6.6" width="0.8" height="25.5" fill="#e9bc94"/><rect x="179.8" y="6.6" width="0.8" height="25.5" fill="#e9bc94"/><rect x="209.8" y="6.6" width="0.8" height="25.5" fill="#e9bc94"/><rect x="239.8" y="6.6" width="0.8" height="25.5" fill="#e9bc94"/></svg><span class="n">IGH ME Strings Loop 02 Gmin SC</span></div>
<div style="left:785.6px;top:305.6px;width:20px;height:14.4px;border-radius:7.2px;background:rgba(196,120,200,0.82)"></div>
<svg style="left:789.6px;top:308.6px" width="8" height="8" viewBox="0 0 24 24" fill="none" stroke="#ecd6f0" stroke-width="2.4" stroke-linecap="round"><circle cx="7" cy="6" r="3.4"/><path d="M9 9l11 12M20 3L9 15"/></svg>
<div style="left:656.35px;top:57px;width:0.8px;height:340px;background:#dcdcdc"></div>
<div style="left:655.1px;top:55.2px;width:3.2px;height:3.2px;border-radius:50%;background:#fff"></div>
<div style="left:117.2px;top:386.2px;width:139px;height:3.6px;border-radius:1.8px;background:#686c71"></div>
<div style="left:0;top:392.6px;width:800px;height:18.4px;background:#121518"></div>
<div class="pill" style="left:6px;top:395.6px;width:120px;height:13.6px;border-radius:6.8px;background:#191c1f"></div>
<svg style="left:13.6px;top:399.4px" width="6" height="6" viewBox="0 0 24 24" fill="#8d9298"><path d="M12 2l9 18H3z"/></svg>
<span class="bt" style="left:23.4px;top:399.8px;font-weight:700">自動音高™</span>
<span class="bt" style="left:62.4px;top:399.6px;font-style:italic;font-weight:700">fx</span>
<span class="bt" style="left:70.4px;top:399.8px;font-weight:700">影響</span>
<svg style="left:94.6px;top:399.6px" width="5.6" height="5.6" viewBox="0 0 24 24" fill="none" stroke="#8d9298" stroke-width="3" stroke-linecap="round"><path d="M4 20l3-1L20 6l-2-2L5 17z"/></svg>
<span class="bt" style="left:102.8px;top:399.8px;font-weight:700">編輯器</span>
<div style="left:51.6px;top:399px;width:0.5px;height:7px;background:#24272a"></div>
<div style="left:86.6px;top:399px;width:0.5px;height:7px;background:#24272a"></div>
<div class="pill" style="left:617px;top:395.6px;width:135px;height:13.6px;border-radius:6.8px;background:#191c1f"></div>
<svg style="left:625.4px;top:399.6px" width="5.6" height="5.6" viewBox="0 0 24 24" fill="none" stroke="#d4d7da" stroke-width="3.4" stroke-linecap="round"><path d="M4 20l3-1L20 6l-2-2L5 17z"/></svg>
<span class="bt" style="left:634px;top:399.8px;color:#dfe2e5;font-weight:700">歌詞/註釋</span>
<div style="left:662.4px;top:399px;width:0.5px;height:7px;background:#24272a"></div>
<svg style="left:668.6px;top:399.4px" width="5.8" height="5.8" viewBox="0 0 24 24"><circle cx="12" cy="13" r="8.6" fill="none" stroke="#dfe2e5" stroke-width="2.6"/><path d="M12 2v11h-4" fill="none" stroke="#dfe2e5" stroke-width="2.6"/></svg>
<span class="bt" style="left:675px;top:399.9px;color:#dfe2e5;font-weight:700;letter-spacing:-0.45px">BandLab Sounds</span>
<div style="left:717.4px;top:399px;width:0.5px;height:7px;background:#24272a"></div>
<svg style="left:724.6px;top:399.4px" width="6" height="6" viewBox="0 0 24 24" fill="none" stroke="#dfe2e5" stroke-width="2.6"><circle cx="12" cy="11" r="8.5"/><path d="M16 18l5 4"/></svg>
<span class="bt" style="left:734.2px;top:399.8px;color:#dfe2e5;font-weight:700">聊天</span>
<div class="pill" style="left:756.4px;top:395.6px;width:40px;height:13.6px;border-radius:6.8px;background:#191c1f"></div>
<svg style="left:760.6px;top:399.6px" width="5.6" height="5.6" viewBox="0 0 24 24" fill="none" stroke="#dfe2e5" stroke-width="2.6"><path d="M9 9h6v6H9zM9 9H6a3 3 0 1 1 3-3zM15 9V6a3 3 0 1 1 3 3zM15 15h3a3 3 0 1 1-3 3zM9 15v3a3 3 0 1 1-3-3z"/></svg>
<span class="bt" style="left:768.8px;top:399.8px;color:#dfe2e5;font-weight:700">快捷方式</span>
</div></body></html>
